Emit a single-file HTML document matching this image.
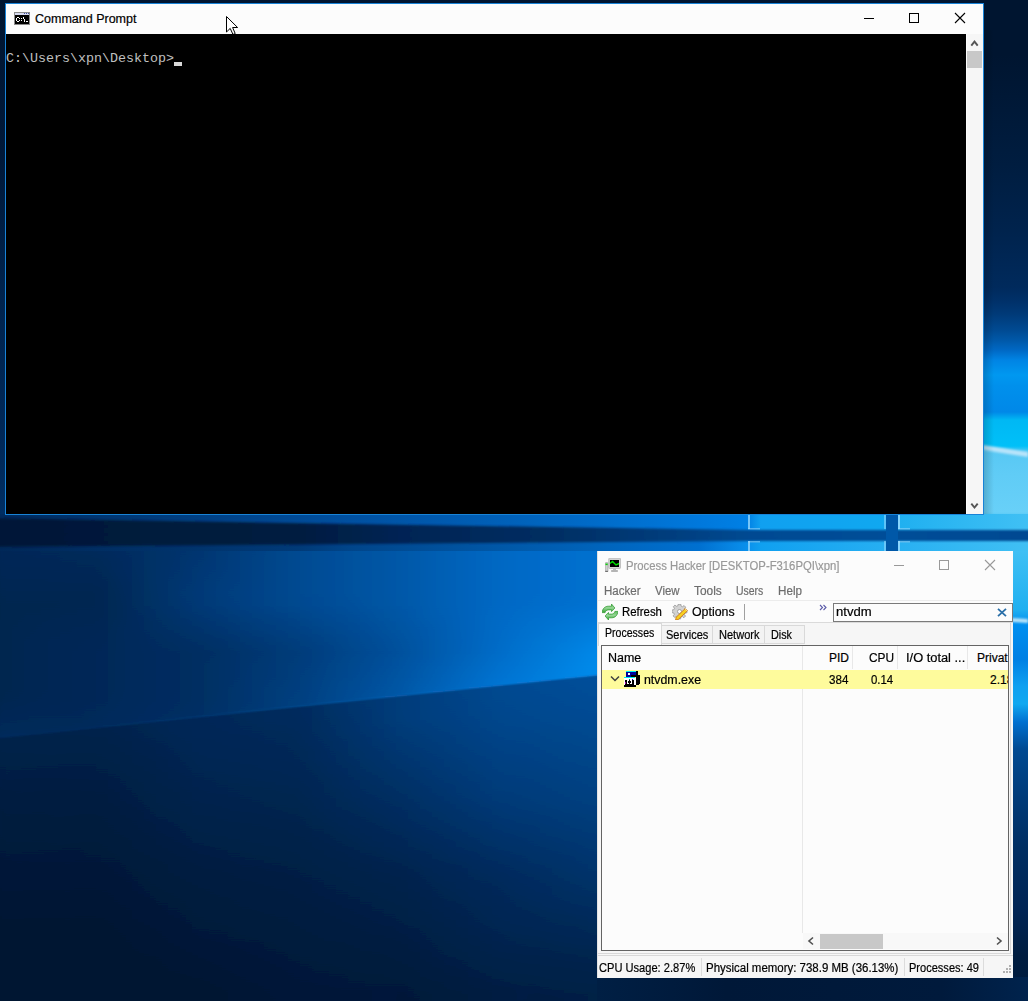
<!DOCTYPE html>
<html><head><meta charset="utf-8">
<style>
html,body{margin:0;padding:0;width:1028px;height:1001px;overflow:hidden;background:#011530;}
*{box-sizing:border-box;}
.a{position:absolute;}
.t{position:absolute;white-space:pre;font-family:"Liberation Sans",sans-serif;font-size:12px;line-height:14px;transform-origin:0 0;color:#000;-webkit-text-stroke:0.2px currentColor;}
#bg{position:absolute;left:0;top:0;width:1028px;height:1001px;}
</style></head><body>
<svg id="bg" width="1028" height="1001" viewBox="0 0 1028 1001">
  <defs>
    <filter id="b20" x="-10%" y="-10%" width="120%" height="120%"><feGaussianBlur stdDeviation="22"/></filter>
    <filter id="b4" x="-10%" y="-50%" width="120%" height="200%"><feGaussianBlur stdDeviation="3"/></filter>
    <filter id="b1" x="-10%" y="-100%" width="120%" height="300%"><feGaussianBlur stdDeviation="1"/></filter>
    <linearGradient id="rs" x1="0" y1="0" x2="0" y2="551" gradientUnits="userSpaceOnUse"><stop offset="0.0000" stop-color="#001530"/><stop offset="0.0998" stop-color="#001530"/><stop offset="0.2995" stop-color="#001d40"/><stop offset="0.4192" stop-color="#00234d"/><stop offset="0.5209" stop-color="#002a5c"/><stop offset="0.5445" stop-color="#003068"/><stop offset="0.5699" stop-color="#003a78"/><stop offset="0.5989" stop-color="#004a92"/><stop offset="0.6171" stop-color="#0058a8"/><stop offset="0.6352" stop-color="#0068c4"/><stop offset="0.6534" stop-color="#0084e4"/><stop offset="0.6806" stop-color="#0098f0"/><stop offset="0.7005" stop-color="#0090ec"/><stop offset="0.7477" stop-color="#0088e8"/><stop offset="0.7623" stop-color="#00b8f4"/><stop offset="0.8094" stop-color="#00c0f8"/><stop offset="0.8203" stop-color="#58c8f4"/><stop offset="0.8621" stop-color="#60ccf6"/><stop offset="0.9292" stop-color="#68d0f8"/><stop offset="0.9437" stop-color="#40c0f4"/><stop offset="1.0000" stop-color="#40c0f4"/></linearGradient>
    <linearGradient id="rs2" x1="0" y1="551" x2="0" y2="1001" gradientUnits="userSpaceOnUse"><stop offset="0" stop-color="#40c0f4"/><stop offset="0.13" stop-color="#20b0f0"/><stop offset="0.16" stop-color="#0090f0"/><stop offset="0.24" stop-color="#0080e4"/><stop offset="0.3" stop-color="#10a0f0"/><stop offset="0.34" stop-color="#10a8f0"/><stop offset="0.38" stop-color="#0070d0"/><stop offset="0.44" stop-color="#004a92"/><stop offset="0.55" stop-color="#003a78"/><stop offset="0.66" stop-color="#002e62"/><stop offset="0.8" stop-color="#002454"/><stop offset="0.9" stop-color="#001d40"/><stop offset="1" stop-color="#001a3c"/></linearGradient>
    <linearGradient id="bandtop" x1="0" y1="0" x2="1028" y2="0" gradientUnits="userSpaceOnUse">
      <stop offset="0" stop-color="#00336b"/>
      <stop offset="0.33" stop-color="#004080"/>
      <stop offset="0.45" stop-color="#0058a8"/>
      <stop offset="0.62" stop-color="#0070d0"/>
      <stop offset="0.72" stop-color="#0a90ec"/>
      <stop offset="0.80" stop-color="#10a0f0"/>
      <stop offset="1" stop-color="#40c0f4"/>
    </linearGradient>
    <linearGradient id="banddark" x1="0" y1="0" x2="1028" y2="0" gradientUnits="userSpaceOnUse">
      <stop offset="0" stop-color="#001838"/>
      <stop offset="0.33" stop-color="#001d40"/>
      <stop offset="0.5" stop-color="#002858"/>
      <stop offset="0.65" stop-color="#003a78"/>
      <stop offset="0.75" stop-color="#004a92"/>
      <stop offset="1" stop-color="#004a92"/>
    </linearGradient>
    <linearGradient id="bandbot" x1="0" y1="0" x2="1028" y2="0" gradientUnits="userSpaceOnUse">
      <stop offset="0" stop-color="#002e62"/>
      <stop offset="0.33" stop-color="#003a78"/>
      <stop offset="0.5" stop-color="#004a92"/>
      <stop offset="0.65" stop-color="#0070d0"/>
      <stop offset="0.75" stop-color="#10a0f0"/>
      <stop offset="1" stop-color="#40c0f4"/>
    </linearGradient>
    <linearGradient id="ray" x1="0" y1="0" x2="600" y2="0" gradientUnits="userSpaceOnUse">
      <stop offset="0" stop-color="#003a78"/>
      <stop offset="0.5" stop-color="#0058a8"/>
      <stop offset="1" stop-color="#1890f0"/>
    </linearGradient>
  </defs>
  <rect x="0" y="0" width="1028" height="1001" fill="#001530"/>
  <filter id="bh" x="-5%" y="0%" width="110%" height="100%"><feGaussianBlur stdDeviation="7 0.6"/></filter>
  <defs><linearGradient id="c0" x1="0" y1="0" x2="0" y2="1"><stop offset="0.0000" stop-color="#002858"/><stop offset="0.0263" stop-color="#002856"/><stop offset="0.0526" stop-color="#002755"/><stop offset="0.0789" stop-color="#002753"/><stop offset="0.1053" stop-color="#002651"/><stop offset="0.1316" stop-color="#002650"/><stop offset="0.1579" stop-color="#002650"/><stop offset="0.1842" stop-color="#002650"/><stop offset="0.2105" stop-color="#002650"/><stop offset="0.2368" stop-color="#002650"/><stop offset="0.2632" stop-color="#002650"/><stop offset="0.2895" stop-color="#002650"/><stop offset="0.3158" stop-color="#002650"/><stop offset="0.3421" stop-color="#002650"/><stop offset="0.3684" stop-color="#002754"/><stop offset="0.3947" stop-color="#002858"/><stop offset="0.4213" stop-color="#002a5b"/><stop offset="0.4235" stop-color="#00295b"/><stop offset="0.4264" stop-color="#00224a"/><stop offset="0.4496" stop-color="#002148"/><stop offset="0.4803" stop-color="#002046"/><stop offset="0.5110" stop-color="#001f44"/><stop offset="0.5417" stop-color="#001e41"/><stop offset="0.5724" stop-color="#001d3f"/><stop offset="0.6031" stop-color="#001c3e"/><stop offset="0.6338" stop-color="#001b3c"/><stop offset="0.6645" stop-color="#001a3b"/><stop offset="0.6952" stop-color="#001939"/><stop offset="0.7259" stop-color="#001838"/><stop offset="0.7566" stop-color="#001736"/><stop offset="0.7873" stop-color="#001735"/><stop offset="0.8180" stop-color="#001633"/><stop offset="0.8487" stop-color="#001632"/><stop offset="0.8794" stop-color="#001530"/><stop offset="0.9101" stop-color="#001530"/><stop offset="0.9408" stop-color="#001530"/><stop offset="0.9715" stop-color="#001530"/></linearGradient><linearGradient id="c1" x1="0" y1="0" x2="0" y2="1"><stop offset="0.0000" stop-color="#002858"/><stop offset="0.0263" stop-color="#002856"/><stop offset="0.0526" stop-color="#002755"/><stop offset="0.0789" stop-color="#002753"/><stop offset="0.1053" stop-color="#002651"/><stop offset="0.1316" stop-color="#002650"/><stop offset="0.1579" stop-color="#002650"/><stop offset="0.1842" stop-color="#002650"/><stop offset="0.2105" stop-color="#002650"/><stop offset="0.2368" stop-color="#002650"/><stop offset="0.2632" stop-color="#002650"/><stop offset="0.2895" stop-color="#002650"/><stop offset="0.3158" stop-color="#002650"/><stop offset="0.3421" stop-color="#002651"/><stop offset="0.3684" stop-color="#002754"/><stop offset="0.3947" stop-color="#002958"/><stop offset="0.4186" stop-color="#002a5b"/><stop offset="0.4208" stop-color="#002a5b"/><stop offset="0.4236" stop-color="#00224a"/><stop offset="0.4474" stop-color="#002148"/><stop offset="0.4781" stop-color="#002046"/><stop offset="0.5088" stop-color="#001f44"/><stop offset="0.5395" stop-color="#001e41"/><stop offset="0.5702" stop-color="#001d3f"/><stop offset="0.6009" stop-color="#001c3e"/><stop offset="0.6316" stop-color="#001b3c"/><stop offset="0.6623" stop-color="#001a3b"/><stop offset="0.6930" stop-color="#001939"/><stop offset="0.7237" stop-color="#001838"/><stop offset="0.7544" stop-color="#001737"/><stop offset="0.7851" stop-color="#001735"/><stop offset="0.8158" stop-color="#001634"/><stop offset="0.8465" stop-color="#001632"/><stop offset="0.8772" stop-color="#001531"/><stop offset="0.9079" stop-color="#001530"/><stop offset="0.9386" stop-color="#001530"/><stop offset="0.9693" stop-color="#001530"/><stop offset="1.0000" stop-color="#001530"/></linearGradient><linearGradient id="c2" x1="0" y1="0" x2="0" y2="1"><stop offset="0.0000" stop-color="#002859"/><stop offset="0.0263" stop-color="#002857"/><stop offset="0.0526" stop-color="#002755"/><stop offset="0.0789" stop-color="#002753"/><stop offset="0.1053" stop-color="#002651"/><stop offset="0.1316" stop-color="#002650"/><stop offset="0.1579" stop-color="#002650"/><stop offset="0.1842" stop-color="#002651"/><stop offset="0.2105" stop-color="#002651"/><stop offset="0.2368" stop-color="#002651"/><stop offset="0.2632" stop-color="#002651"/><stop offset="0.2895" stop-color="#002651"/><stop offset="0.3158" stop-color="#002651"/><stop offset="0.3421" stop-color="#002652"/><stop offset="0.3684" stop-color="#002855"/><stop offset="0.3947" stop-color="#002958"/><stop offset="0.4158" stop-color="#002a5b"/><stop offset="0.4180" stop-color="#002b5c"/><stop offset="0.4209" stop-color="#00224a"/><stop offset="0.4452" stop-color="#002148"/><stop offset="0.4759" stop-color="#002046"/><stop offset="0.5066" stop-color="#001f44"/><stop offset="0.5373" stop-color="#001e42"/><stop offset="0.5680" stop-color="#001d40"/><stop offset="0.5987" stop-color="#001c3e"/><stop offset="0.6294" stop-color="#001b3d"/><stop offset="0.6601" stop-color="#001a3b"/><stop offset="0.6908" stop-color="#00193a"/><stop offset="0.7215" stop-color="#001838"/><stop offset="0.7522" stop-color="#001737"/><stop offset="0.7829" stop-color="#001735"/><stop offset="0.8136" stop-color="#001634"/><stop offset="0.8443" stop-color="#001632"/><stop offset="0.8750" stop-color="#001531"/><stop offset="0.9057" stop-color="#001530"/><stop offset="0.9364" stop-color="#001530"/><stop offset="0.9671" stop-color="#001530"/><stop offset="0.9978" stop-color="#001530"/></linearGradient><linearGradient id="c3" x1="0" y1="0" x2="0" y2="1"><stop offset="0.0000" stop-color="#002959"/><stop offset="0.0263" stop-color="#002857"/><stop offset="0.0526" stop-color="#002755"/><stop offset="0.0789" stop-color="#002753"/><stop offset="0.1053" stop-color="#002651"/><stop offset="0.1316" stop-color="#002650"/><stop offset="0.1579" stop-color="#002651"/><stop offset="0.1842" stop-color="#002651"/><stop offset="0.2105" stop-color="#002652"/><stop offset="0.2368" stop-color="#002752"/><stop offset="0.2632" stop-color="#002752"/><stop offset="0.2895" stop-color="#002752"/><stop offset="0.3158" stop-color="#002752"/><stop offset="0.3421" stop-color="#002753"/><stop offset="0.3684" stop-color="#002856"/><stop offset="0.3947" stop-color="#002958"/><stop offset="0.4130" stop-color="#00295a"/><stop offset="0.4152" stop-color="#012b5d"/><stop offset="0.4181" stop-color="#00224a"/><stop offset="0.4408" stop-color="#002149"/><stop offset="0.4715" stop-color="#002046"/><stop offset="0.5022" stop-color="#001f44"/><stop offset="0.5329" stop-color="#001e42"/><stop offset="0.5636" stop-color="#001d40"/><stop offset="0.5943" stop-color="#001c3e"/><stop offset="0.6250" stop-color="#001b3d"/><stop offset="0.6557" stop-color="#001a3b"/><stop offset="0.6864" stop-color="#00193a"/><stop offset="0.7171" stop-color="#001838"/><stop offset="0.7478" stop-color="#001837"/><stop offset="0.7785" stop-color="#001735"/><stop offset="0.8092" stop-color="#001634"/><stop offset="0.8399" stop-color="#001632"/><stop offset="0.8706" stop-color="#001531"/><stop offset="0.9013" stop-color="#001530"/><stop offset="0.9320" stop-color="#001530"/><stop offset="0.9627" stop-color="#001530"/><stop offset="0.9934" stop-color="#001530"/></linearGradient><linearGradient id="c4" x1="0" y1="0" x2="0" y2="1"><stop offset="0.0000" stop-color="#00295a"/><stop offset="0.0263" stop-color="#002858"/><stop offset="0.0526" stop-color="#002855"/><stop offset="0.0789" stop-color="#002753"/><stop offset="0.1053" stop-color="#002651"/><stop offset="0.1316" stop-color="#002650"/><stop offset="0.1579" stop-color="#002651"/><stop offset="0.1842" stop-color="#002652"/><stop offset="0.2105" stop-color="#002753"/><stop offset="0.2368" stop-color="#002753"/><stop offset="0.2632" stop-color="#002753"/><stop offset="0.2895" stop-color="#002753"/><stop offset="0.3158" stop-color="#002753"/><stop offset="0.3421" stop-color="#002754"/><stop offset="0.3684" stop-color="#002856"/><stop offset="0.3947" stop-color="#002959"/><stop offset="0.4103" stop-color="#00295a"/><stop offset="0.4125" stop-color="#012c5e"/><stop offset="0.4153" stop-color="#00224b"/><stop offset="0.4386" stop-color="#002149"/><stop offset="0.4693" stop-color="#002047"/><stop offset="0.5000" stop-color="#001f44"/><stop offset="0.5307" stop-color="#001e42"/><stop offset="0.5614" stop-color="#001d40"/><stop offset="0.5921" stop-color="#001c3e"/><stop offset="0.6228" stop-color="#001b3d"/><stop offset="0.6535" stop-color="#001a3b"/><stop offset="0.6842" stop-color="#00193a"/><stop offset="0.7149" stop-color="#001838"/><stop offset="0.7456" stop-color="#001837"/><stop offset="0.7763" stop-color="#001735"/><stop offset="0.8070" stop-color="#001634"/><stop offset="0.8377" stop-color="#001632"/><stop offset="0.8684" stop-color="#001531"/><stop offset="0.8991" stop-color="#001530"/><stop offset="0.9298" stop-color="#001530"/><stop offset="0.9605" stop-color="#001530"/><stop offset="0.9912" stop-color="#001530"/></linearGradient><linearGradient id="c5" x1="0" y1="0" x2="0" y2="1"><stop offset="0.0000" stop-color="#00295a"/><stop offset="0.0263" stop-color="#002858"/><stop offset="0.0526" stop-color="#002856"/><stop offset="0.0789" stop-color="#002754"/><stop offset="0.1053" stop-color="#002651"/><stop offset="0.1316" stop-color="#002650"/><stop offset="0.1579" stop-color="#002651"/><stop offset="0.1842" stop-color="#002753"/><stop offset="0.2105" stop-color="#002754"/><stop offset="0.2368" stop-color="#002754"/><stop offset="0.2632" stop-color="#002754"/><stop offset="0.2895" stop-color="#002754"/><stop offset="0.3158" stop-color="#002754"/><stop offset="0.3421" stop-color="#002755"/><stop offset="0.3684" stop-color="#002857"/><stop offset="0.3947" stop-color="#002959"/><stop offset="0.4075" stop-color="#00295a"/><stop offset="0.4097" stop-color="#012c5f"/><stop offset="0.4126" stop-color="#00224b"/><stop offset="0.4364" stop-color="#002149"/><stop offset="0.4671" stop-color="#002047"/><stop offset="0.4978" stop-color="#001f45"/><stop offset="0.5285" stop-color="#001e42"/><stop offset="0.5592" stop-color="#001d40"/><stop offset="0.5899" stop-color="#001c3f"/><stop offset="0.6206" stop-color="#001b3d"/><stop offset="0.6513" stop-color="#001a3c"/><stop offset="0.6820" stop-color="#00193a"/><stop offset="0.7127" stop-color="#001839"/><stop offset="0.7434" stop-color="#001837"/><stop offset="0.7741" stop-color="#001736"/><stop offset="0.8048" stop-color="#001734"/><stop offset="0.8355" stop-color="#001633"/><stop offset="0.8662" stop-color="#001531"/><stop offset="0.8969" stop-color="#001530"/><stop offset="0.9276" stop-color="#001530"/><stop offset="0.9583" stop-color="#001530"/><stop offset="0.9890" stop-color="#001530"/></linearGradient><linearGradient id="c6" x1="0" y1="0" x2="0" y2="1"><stop offset="0.0000" stop-color="#00295b"/><stop offset="0.0263" stop-color="#002958"/><stop offset="0.0526" stop-color="#002856"/><stop offset="0.0789" stop-color="#002754"/><stop offset="0.1053" stop-color="#002651"/><stop offset="0.1316" stop-color="#002651"/><stop offset="0.1579" stop-color="#002652"/><stop offset="0.1842" stop-color="#002753"/><stop offset="0.2105" stop-color="#002754"/><stop offset="0.2368" stop-color="#002755"/><stop offset="0.2632" stop-color="#002755"/><stop offset="0.2895" stop-color="#002755"/><stop offset="0.3158" stop-color="#002755"/><stop offset="0.3421" stop-color="#002755"/><stop offset="0.3684" stop-color="#002857"/><stop offset="0.3947" stop-color="#002959"/><stop offset="0.4048" stop-color="#00295a"/><stop offset="0.4070" stop-color="#012d60"/><stop offset="0.4098" stop-color="#00224b"/><stop offset="0.4342" stop-color="#002149"/><stop offset="0.4649" stop-color="#002047"/><stop offset="0.4956" stop-color="#001f45"/><stop offset="0.5263" stop-color="#001e42"/><stop offset="0.5570" stop-color="#001d40"/><stop offset="0.5877" stop-color="#001c3f"/><stop offset="0.6184" stop-color="#001b3d"/><stop offset="0.6491" stop-color="#001a3c"/><stop offset="0.6798" stop-color="#00193a"/><stop offset="0.7105" stop-color="#001839"/><stop offset="0.7412" stop-color="#001837"/><stop offset="0.7719" stop-color="#001736"/><stop offset="0.8026" stop-color="#001734"/><stop offset="0.8333" stop-color="#001633"/><stop offset="0.8640" stop-color="#001531"/><stop offset="0.8947" stop-color="#001530"/><stop offset="0.9254" stop-color="#001530"/><stop offset="0.9561" stop-color="#001530"/><stop offset="0.9868" stop-color="#001530"/></linearGradient><linearGradient id="c7" x1="0" y1="0" x2="0" y2="1"><stop offset="0.0000" stop-color="#002a5b"/><stop offset="0.0263" stop-color="#002959"/><stop offset="0.0526" stop-color="#002856"/><stop offset="0.0789" stop-color="#002754"/><stop offset="0.1053" stop-color="#002651"/><stop offset="0.1316" stop-color="#002651"/><stop offset="0.1579" stop-color="#002752"/><stop offset="0.1842" stop-color="#002754"/><stop offset="0.2105" stop-color="#002755"/><stop offset="0.2368" stop-color="#002856"/><stop offset="0.2632" stop-color="#002856"/><stop offset="0.2895" stop-color="#002856"/><stop offset="0.3158" stop-color="#002856"/><stop offset="0.3421" stop-color="#002856"/><stop offset="0.3684" stop-color="#002858"/><stop offset="0.3947" stop-color="#00295a"/><stop offset="0.4020" stop-color="#00295a"/><stop offset="0.4042" stop-color="#022e61"/><stop offset="0.4070" stop-color="#00224b"/><stop offset="0.4298" stop-color="#00214a"/><stop offset="0.4605" stop-color="#002047"/><stop offset="0.4912" stop-color="#001f45"/><stop offset="0.5219" stop-color="#001e43"/><stop offset="0.5526" stop-color="#001d40"/><stop offset="0.5833" stop-color="#001c3f"/><stop offset="0.6140" stop-color="#001b3d"/><stop offset="0.6447" stop-color="#001a3c"/><stop offset="0.6754" stop-color="#00193a"/><stop offset="0.7061" stop-color="#001939"/><stop offset="0.7368" stop-color="#001837"/><stop offset="0.7675" stop-color="#001736"/><stop offset="0.7982" stop-color="#001734"/><stop offset="0.8289" stop-color="#001633"/><stop offset="0.8596" stop-color="#001631"/><stop offset="0.8904" stop-color="#001530"/><stop offset="0.9211" stop-color="#001530"/><stop offset="0.9518" stop-color="#001530"/><stop offset="0.9825" stop-color="#001530"/></linearGradient><linearGradient id="c8" x1="0" y1="0" x2="0" y2="1"><stop offset="0.0000" stop-color="#002a5c"/><stop offset="0.0263" stop-color="#002959"/><stop offset="0.0526" stop-color="#002857"/><stop offset="0.0789" stop-color="#002754"/><stop offset="0.1053" stop-color="#002651"/><stop offset="0.1316" stop-color="#002651"/><stop offset="0.1579" stop-color="#002752"/><stop offset="0.1842" stop-color="#002754"/><stop offset="0.2105" stop-color="#002756"/><stop offset="0.2368" stop-color="#002857"/><stop offset="0.2632" stop-color="#002857"/><stop offset="0.2895" stop-color="#002857"/><stop offset="0.3158" stop-color="#002857"/><stop offset="0.3421" stop-color="#002857"/><stop offset="0.3684" stop-color="#002959"/><stop offset="0.3947" stop-color="#00295a"/><stop offset="0.3992" stop-color="#00295a"/><stop offset="0.4014" stop-color="#022f63"/><stop offset="0.4043" stop-color="#00224b"/><stop offset="0.4276" stop-color="#00224a"/><stop offset="0.4583" stop-color="#002047"/><stop offset="0.4890" stop-color="#001f45"/><stop offset="0.5197" stop-color="#001e43"/><stop offset="0.5504" stop-color="#001d41"/><stop offset="0.5811" stop-color="#001c3f"/><stop offset="0.6118" stop-color="#001b3d"/><stop offset="0.6425" stop-color="#001a3c"/><stop offset="0.6732" stop-color="#001a3a"/><stop offset="0.7039" stop-color="#001939"/><stop offset="0.7346" stop-color="#001837"/><stop offset="0.7654" stop-color="#001736"/><stop offset="0.7961" stop-color="#001734"/><stop offset="0.8268" stop-color="#001633"/><stop offset="0.8575" stop-color="#001631"/><stop offset="0.8882" stop-color="#001530"/><stop offset="0.9189" stop-color="#001530"/><stop offset="0.9496" stop-color="#001530"/><stop offset="0.9803" stop-color="#001530"/></linearGradient><linearGradient id="c9" x1="0" y1="0" x2="0" y2="1"><stop offset="0.0000" stop-color="#002a5c"/><stop offset="0.0263" stop-color="#00295a"/><stop offset="0.0526" stop-color="#002957"/><stop offset="0.0789" stop-color="#002855"/><stop offset="0.1053" stop-color="#002752"/><stop offset="0.1316" stop-color="#002752"/><stop offset="0.1579" stop-color="#002753"/><stop offset="0.1842" stop-color="#002755"/><stop offset="0.2105" stop-color="#002857"/><stop offset="0.2368" stop-color="#002858"/><stop offset="0.2632" stop-color="#002858"/><stop offset="0.2895" stop-color="#002858"/><stop offset="0.3158" stop-color="#002858"/><stop offset="0.3421" stop-color="#002858"/><stop offset="0.3684" stop-color="#00295a"/><stop offset="0.3947" stop-color="#00295b"/><stop offset="0.3965" stop-color="#00295b"/><stop offset="0.3987" stop-color="#022f64"/><stop offset="0.4015" stop-color="#00224c"/><stop offset="0.4254" stop-color="#00224a"/><stop offset="0.4561" stop-color="#002148"/><stop offset="0.4868" stop-color="#002046"/><stop offset="0.5175" stop-color="#001f43"/><stop offset="0.5482" stop-color="#001d41"/><stop offset="0.5789" stop-color="#001d3f"/><stop offset="0.6096" stop-color="#001c3e"/><stop offset="0.6404" stop-color="#001b3c"/><stop offset="0.6711" stop-color="#001a3b"/><stop offset="0.7018" stop-color="#001939"/><stop offset="0.7325" stop-color="#001838"/><stop offset="0.7632" stop-color="#001736"/><stop offset="0.7939" stop-color="#001735"/><stop offset="0.8246" stop-color="#001633"/><stop offset="0.8553" stop-color="#001632"/><stop offset="0.8860" stop-color="#001530"/><stop offset="0.9167" stop-color="#001530"/><stop offset="0.9474" stop-color="#001530"/><stop offset="0.9781" stop-color="#001530"/></linearGradient><linearGradient id="c10" x1="0" y1="0" x2="0" y2="1"><stop offset="0.0000" stop-color="#002c5f"/><stop offset="0.0263" stop-color="#002b5d"/><stop offset="0.0526" stop-color="#002a5b"/><stop offset="0.0789" stop-color="#002a59"/><stop offset="0.1053" stop-color="#002957"/><stop offset="0.1316" stop-color="#002956"/><stop offset="0.1579" stop-color="#002957"/><stop offset="0.1842" stop-color="#002958"/><stop offset="0.2105" stop-color="#002959"/><stop offset="0.2368" stop-color="#002959"/><stop offset="0.2632" stop-color="#002959"/><stop offset="0.2895" stop-color="#002959"/><stop offset="0.3158" stop-color="#002959"/><stop offset="0.3421" stop-color="#00295a"/><stop offset="0.3684" stop-color="#00295b"/><stop offset="0.3937" stop-color="#002a5c"/><stop offset="0.3959" stop-color="#023166"/><stop offset="0.3987" stop-color="#00234d"/><stop offset="0.4232" stop-color="#00224c"/><stop offset="0.4539" stop-color="#002149"/><stop offset="0.4846" stop-color="#002047"/><stop offset="0.5154" stop-color="#001f45"/><stop offset="0.5461" stop-color="#001e43"/><stop offset="0.5768" stop-color="#001d41"/><stop offset="0.6075" stop-color="#001c3f"/><stop offset="0.6382" stop-color="#001b3e"/><stop offset="0.6689" stop-color="#001a3c"/><stop offset="0.6996" stop-color="#00193a"/><stop offset="0.7303" stop-color="#001939"/><stop offset="0.7610" stop-color="#001837"/><stop offset="0.7917" stop-color="#001736"/><stop offset="0.8224" stop-color="#001734"/><stop offset="0.8531" stop-color="#001633"/><stop offset="0.8838" stop-color="#001631"/><stop offset="0.9145" stop-color="#001531"/><stop offset="0.9452" stop-color="#001531"/><stop offset="0.9759" stop-color="#001530"/></linearGradient><linearGradient id="c11" x1="0" y1="0" x2="0" y2="1"><stop offset="0.0000" stop-color="#002d61"/><stop offset="0.0263" stop-color="#002c60"/><stop offset="0.0526" stop-color="#002c5e"/><stop offset="0.0789" stop-color="#002c5d"/><stop offset="0.1053" stop-color="#002b5b"/><stop offset="0.1316" stop-color="#002b5a"/><stop offset="0.1579" stop-color="#002b5a"/><stop offset="0.1842" stop-color="#002a5b"/><stop offset="0.2105" stop-color="#002a5b"/><stop offset="0.2368" stop-color="#002a5b"/><stop offset="0.2632" stop-color="#002a5b"/><stop offset="0.2895" stop-color="#002a5b"/><stop offset="0.3158" stop-color="#002a5b"/><stop offset="0.3421" stop-color="#002a5b"/><stop offset="0.3684" stop-color="#002a5c"/><stop offset="0.3909" stop-color="#002b5d"/><stop offset="0.3931" stop-color="#033268"/><stop offset="0.3960" stop-color="#00244f"/><stop offset="0.4189" stop-color="#00234d"/><stop offset="0.4496" stop-color="#00224b"/><stop offset="0.4803" stop-color="#002149"/><stop offset="0.5110" stop-color="#002047"/><stop offset="0.5417" stop-color="#001f45"/><stop offset="0.5724" stop-color="#001e43"/><stop offset="0.6031" stop-color="#001d41"/><stop offset="0.6338" stop-color="#001c3f"/><stop offset="0.6645" stop-color="#001b3d"/><stop offset="0.6952" stop-color="#001a3c"/><stop offset="0.7259" stop-color="#00193a"/><stop offset="0.7566" stop-color="#001938"/><stop offset="0.7873" stop-color="#001837"/><stop offset="0.8180" stop-color="#001735"/><stop offset="0.8487" stop-color="#001734"/><stop offset="0.8794" stop-color="#001633"/><stop offset="0.9101" stop-color="#001632"/><stop offset="0.9408" stop-color="#001531"/><stop offset="0.9715" stop-color="#001531"/></linearGradient><linearGradient id="c12" x1="0" y1="0" x2="0" y2="1"><stop offset="0.0000" stop-color="#002e64"/><stop offset="0.0263" stop-color="#002e63"/><stop offset="0.0526" stop-color="#002e62"/><stop offset="0.0789" stop-color="#002e61"/><stop offset="0.1053" stop-color="#002e60"/><stop offset="0.1316" stop-color="#002d5f"/><stop offset="0.1579" stop-color="#002c5e"/><stop offset="0.1842" stop-color="#002c5d"/><stop offset="0.2105" stop-color="#002b5c"/><stop offset="0.2368" stop-color="#002a5c"/><stop offset="0.2632" stop-color="#002a5c"/><stop offset="0.2895" stop-color="#002a5c"/><stop offset="0.3158" stop-color="#002a5c"/><stop offset="0.3421" stop-color="#002a5c"/><stop offset="0.3684" stop-color="#002b5d"/><stop offset="0.3882" stop-color="#002b5e"/><stop offset="0.3904" stop-color="#03336a"/><stop offset="0.3932" stop-color="#002550"/><stop offset="0.4167" stop-color="#00244f"/><stop offset="0.4474" stop-color="#00234d"/><stop offset="0.4781" stop-color="#00224b"/><stop offset="0.5088" stop-color="#002148"/><stop offset="0.5395" stop-color="#002046"/><stop offset="0.5702" stop-color="#001f44"/><stop offset="0.6009" stop-color="#001e42"/><stop offset="0.6316" stop-color="#001d41"/><stop offset="0.6623" stop-color="#001c3f"/><stop offset="0.6930" stop-color="#001b3d"/><stop offset="0.7237" stop-color="#001a3b"/><stop offset="0.7544" stop-color="#00193a"/><stop offset="0.7851" stop-color="#001838"/><stop offset="0.8158" stop-color="#001837"/><stop offset="0.8465" stop-color="#001735"/><stop offset="0.8772" stop-color="#001634"/><stop offset="0.9079" stop-color="#001633"/><stop offset="0.9386" stop-color="#001632"/><stop offset="0.9693" stop-color="#001531"/><stop offset="1.0000" stop-color="#001530"/></linearGradient><linearGradient id="c13" x1="0" y1="0" x2="0" y2="1"><stop offset="0.0000" stop-color="#003066"/><stop offset="0.0263" stop-color="#003066"/><stop offset="0.0526" stop-color="#003065"/><stop offset="0.0789" stop-color="#003065"/><stop offset="0.1053" stop-color="#003064"/><stop offset="0.1316" stop-color="#003063"/><stop offset="0.1579" stop-color="#002e62"/><stop offset="0.1842" stop-color="#002d60"/><stop offset="0.2105" stop-color="#002c5e"/><stop offset="0.2368" stop-color="#002b5d"/><stop offset="0.2632" stop-color="#002b5d"/><stop offset="0.2895" stop-color="#002b5d"/><stop offset="0.3158" stop-color="#002b5d"/><stop offset="0.3421" stop-color="#002b5d"/><stop offset="0.3684" stop-color="#002c5f"/><stop offset="0.3854" stop-color="#002c60"/><stop offset="0.3876" stop-color="#03346c"/><stop offset="0.3905" stop-color="#002552"/><stop offset="0.4145" stop-color="#002550"/><stop offset="0.4452" stop-color="#00244e"/><stop offset="0.4759" stop-color="#00234c"/><stop offset="0.5066" stop-color="#00224a"/><stop offset="0.5373" stop-color="#002148"/><stop offset="0.5680" stop-color="#002046"/><stop offset="0.5987" stop-color="#001f44"/><stop offset="0.6294" stop-color="#001e42"/><stop offset="0.6601" stop-color="#001d40"/><stop offset="0.6908" stop-color="#001c3e"/><stop offset="0.7215" stop-color="#001b3c"/><stop offset="0.7522" stop-color="#001a3b"/><stop offset="0.7829" stop-color="#001939"/><stop offset="0.8136" stop-color="#001838"/><stop offset="0.8443" stop-color="#001836"/><stop offset="0.8750" stop-color="#001735"/><stop offset="0.9057" stop-color="#001633"/><stop offset="0.9364" stop-color="#001632"/><stop offset="0.9671" stop-color="#001531"/><stop offset="0.9978" stop-color="#001530"/></linearGradient><linearGradient id="c14" x1="0" y1="0" x2="0" y2="1"><stop offset="0.0000" stop-color="#003168"/><stop offset="0.0263" stop-color="#003168"/><stop offset="0.0526" stop-color="#003269"/><stop offset="0.0789" stop-color="#003269"/><stop offset="0.1053" stop-color="#003269"/><stop offset="0.1316" stop-color="#003268"/><stop offset="0.1579" stop-color="#003065"/><stop offset="0.1842" stop-color="#002f63"/><stop offset="0.2105" stop-color="#002d60"/><stop offset="0.2368" stop-color="#002c5e"/><stop offset="0.2632" stop-color="#002c5e"/><stop offset="0.2895" stop-color="#002c5e"/><stop offset="0.3158" stop-color="#002c5e"/><stop offset="0.3421" stop-color="#002c5e"/><stop offset="0.3684" stop-color="#002c60"/><stop offset="0.3827" stop-color="#002d61"/><stop offset="0.3848" stop-color="#03366f"/><stop offset="0.3877" stop-color="#002654"/><stop offset="0.4101" stop-color="#002552"/><stop offset="0.4408" stop-color="#002450"/><stop offset="0.4715" stop-color="#00234e"/><stop offset="0.5022" stop-color="#00224c"/><stop offset="0.5329" stop-color="#00224a"/><stop offset="0.5636" stop-color="#002148"/><stop offset="0.5943" stop-color="#002046"/><stop offset="0.6250" stop-color="#001e44"/><stop offset="0.6557" stop-color="#001d42"/><stop offset="0.6864" stop-color="#001c3f"/><stop offset="0.7171" stop-color="#001b3d"/><stop offset="0.7478" stop-color="#001a3c"/><stop offset="0.7785" stop-color="#001a3a"/><stop offset="0.8092" stop-color="#001939"/><stop offset="0.8399" stop-color="#001837"/><stop offset="0.8706" stop-color="#001736"/><stop offset="0.9013" stop-color="#001734"/><stop offset="0.9320" stop-color="#001633"/><stop offset="0.9627" stop-color="#001632"/><stop offset="0.9934" stop-color="#001530"/></linearGradient><linearGradient id="c15" x1="0" y1="0" x2="0" y2="1"><stop offset="0.0000" stop-color="#00326b"/><stop offset="0.0263" stop-color="#00336b"/><stop offset="0.0526" stop-color="#00336c"/><stop offset="0.0789" stop-color="#00346d"/><stop offset="0.1053" stop-color="#00346d"/><stop offset="0.1316" stop-color="#00346c"/><stop offset="0.1579" stop-color="#003269"/><stop offset="0.1842" stop-color="#003065"/><stop offset="0.2105" stop-color="#002e62"/><stop offset="0.2368" stop-color="#002c5f"/><stop offset="0.2632" stop-color="#002c5f"/><stop offset="0.2895" stop-color="#002c5f"/><stop offset="0.3158" stop-color="#002c5f"/><stop offset="0.3421" stop-color="#002c60"/><stop offset="0.3684" stop-color="#002d61"/><stop offset="0.3799" stop-color="#002d62"/><stop offset="0.3821" stop-color="#043771"/><stop offset="0.3849" stop-color="#002755"/><stop offset="0.4079" stop-color="#002654"/><stop offset="0.4386" stop-color="#002552"/><stop offset="0.4693" stop-color="#002450"/><stop offset="0.5000" stop-color="#00234e"/><stop offset="0.5307" stop-color="#00224b"/><stop offset="0.5614" stop-color="#002149"/><stop offset="0.5921" stop-color="#002047"/><stop offset="0.6228" stop-color="#001f45"/><stop offset="0.6535" stop-color="#001e43"/><stop offset="0.6842" stop-color="#001d41"/><stop offset="0.7149" stop-color="#001c3f"/><stop offset="0.7456" stop-color="#001b3d"/><stop offset="0.7763" stop-color="#001a3b"/><stop offset="0.8070" stop-color="#00193a"/><stop offset="0.8377" stop-color="#001938"/><stop offset="0.8684" stop-color="#001837"/><stop offset="0.8991" stop-color="#001735"/><stop offset="0.9298" stop-color="#001634"/><stop offset="0.9605" stop-color="#001632"/><stop offset="0.9912" stop-color="#001530"/></linearGradient><linearGradient id="c16" x1="0" y1="0" x2="0" y2="1"><stop offset="0.0000" stop-color="#00336d"/><stop offset="0.0263" stop-color="#00346e"/><stop offset="0.0526" stop-color="#00356f"/><stop offset="0.0789" stop-color="#003671"/><stop offset="0.1053" stop-color="#003772"/><stop offset="0.1316" stop-color="#003671"/><stop offset="0.1579" stop-color="#00346c"/><stop offset="0.1842" stop-color="#003168"/><stop offset="0.2105" stop-color="#002f64"/><stop offset="0.2368" stop-color="#002d61"/><stop offset="0.2632" stop-color="#002d61"/><stop offset="0.2895" stop-color="#002d61"/><stop offset="0.3158" stop-color="#002d61"/><stop offset="0.3421" stop-color="#002d61"/><stop offset="0.3684" stop-color="#002e62"/><stop offset="0.3771" stop-color="#002e63"/><stop offset="0.3793" stop-color="#043873"/><stop offset="0.3822" stop-color="#002756"/><stop offset="0.4057" stop-color="#002755"/><stop offset="0.4364" stop-color="#002653"/><stop offset="0.4671" stop-color="#002551"/><stop offset="0.4978" stop-color="#00244f"/><stop offset="0.5285" stop-color="#00234d"/><stop offset="0.5592" stop-color="#00224b"/><stop offset="0.5899" stop-color="#002149"/><stop offset="0.6206" stop-color="#002047"/><stop offset="0.6513" stop-color="#001f44"/><stop offset="0.6820" stop-color="#001e42"/><stop offset="0.7127" stop-color="#001d40"/><stop offset="0.7434" stop-color="#001c3e"/><stop offset="0.7741" stop-color="#001b3c"/><stop offset="0.8048" stop-color="#001a3b"/><stop offset="0.8355" stop-color="#001939"/><stop offset="0.8662" stop-color="#001838"/><stop offset="0.8969" stop-color="#001736"/><stop offset="0.9276" stop-color="#001734"/><stop offset="0.9583" stop-color="#001633"/><stop offset="0.9890" stop-color="#001531"/></linearGradient><linearGradient id="c17" x1="0" y1="0" x2="0" y2="1"><stop offset="0.0000" stop-color="#003570"/><stop offset="0.0263" stop-color="#003671"/><stop offset="0.0526" stop-color="#003773"/><stop offset="0.0789" stop-color="#003875"/><stop offset="0.1053" stop-color="#003976"/><stop offset="0.1316" stop-color="#003875"/><stop offset="0.1579" stop-color="#003670"/><stop offset="0.1842" stop-color="#00336b"/><stop offset="0.2105" stop-color="#003066"/><stop offset="0.2368" stop-color="#002e62"/><stop offset="0.2632" stop-color="#002e62"/><stop offset="0.2895" stop-color="#002e62"/><stop offset="0.3158" stop-color="#002e62"/><stop offset="0.3421" stop-color="#002e62"/><stop offset="0.3684" stop-color="#002f64"/><stop offset="0.3744" stop-color="#002f64"/><stop offset="0.3766" stop-color="#043975"/><stop offset="0.3794" stop-color="#002857"/><stop offset="0.4035" stop-color="#002757"/><stop offset="0.4342" stop-color="#002655"/><stop offset="0.4649" stop-color="#002653"/><stop offset="0.4956" stop-color="#002551"/><stop offset="0.5263" stop-color="#00244f"/><stop offset="0.5570" stop-color="#00234d"/><stop offset="0.5877" stop-color="#00224b"/><stop offset="0.6184" stop-color="#002148"/><stop offset="0.6491" stop-color="#002046"/><stop offset="0.6798" stop-color="#001e43"/><stop offset="0.7105" stop-color="#001d41"/><stop offset="0.7412" stop-color="#001c3f"/><stop offset="0.7719" stop-color="#001b3d"/><stop offset="0.8026" stop-color="#001b3c"/><stop offset="0.8333" stop-color="#001a3b"/><stop offset="0.8640" stop-color="#001939"/><stop offset="0.8947" stop-color="#001837"/><stop offset="0.9254" stop-color="#001735"/><stop offset="0.9561" stop-color="#001633"/><stop offset="0.9868" stop-color="#001531"/></linearGradient><linearGradient id="c18" x1="0" y1="0" x2="0" y2="1"><stop offset="0.0000" stop-color="#003773"/><stop offset="0.0263" stop-color="#003875"/><stop offset="0.0526" stop-color="#003977"/><stop offset="0.0789" stop-color="#003a78"/><stop offset="0.1053" stop-color="#003b7a"/><stop offset="0.1316" stop-color="#003a78"/><stop offset="0.1579" stop-color="#003773"/><stop offset="0.1842" stop-color="#00356e"/><stop offset="0.2105" stop-color="#003268"/><stop offset="0.2368" stop-color="#002f64"/><stop offset="0.2632" stop-color="#003065"/><stop offset="0.2895" stop-color="#003065"/><stop offset="0.3158" stop-color="#003065"/><stop offset="0.3421" stop-color="#003065"/><stop offset="0.3684" stop-color="#003067"/><stop offset="0.3716" stop-color="#003067"/><stop offset="0.3738" stop-color="#043c78"/><stop offset="0.3766" stop-color="#002858"/><stop offset="0.3991" stop-color="#002857"/><stop offset="0.4298" stop-color="#002755"/><stop offset="0.4605" stop-color="#002654"/><stop offset="0.4912" stop-color="#002552"/><stop offset="0.5219" stop-color="#002450"/><stop offset="0.5526" stop-color="#00234e"/><stop offset="0.5833" stop-color="#00224b"/><stop offset="0.6140" stop-color="#002149"/><stop offset="0.6447" stop-color="#002047"/><stop offset="0.6754" stop-color="#001f44"/><stop offset="0.7061" stop-color="#001e42"/><stop offset="0.7368" stop-color="#001d40"/><stop offset="0.7675" stop-color="#001c3e"/><stop offset="0.7982" stop-color="#001b3d"/><stop offset="0.8289" stop-color="#001a3b"/><stop offset="0.8596" stop-color="#00193a"/><stop offset="0.8904" stop-color="#001838"/><stop offset="0.9211" stop-color="#001736"/><stop offset="0.9518" stop-color="#001734"/><stop offset="0.9825" stop-color="#001632"/></linearGradient><linearGradient id="c19" x1="0" y1="0" x2="0" y2="1"><stop offset="0.0000" stop-color="#003a77"/><stop offset="0.0263" stop-color="#003a79"/><stop offset="0.0526" stop-color="#003b7a"/><stop offset="0.0789" stop-color="#003c7c"/><stop offset="0.1053" stop-color="#003d7d"/><stop offset="0.1316" stop-color="#003c7b"/><stop offset="0.1579" stop-color="#003976"/><stop offset="0.1842" stop-color="#003671"/><stop offset="0.2105" stop-color="#00336b"/><stop offset="0.2368" stop-color="#003167"/><stop offset="0.2632" stop-color="#003168"/><stop offset="0.2895" stop-color="#003268"/><stop offset="0.3158" stop-color="#003268"/><stop offset="0.3421" stop-color="#003269"/><stop offset="0.3688" stop-color="#00326a"/><stop offset="0.3710" stop-color="#053e7c"/><stop offset="0.3739" stop-color="#002858"/><stop offset="0.3969" stop-color="#002858"/><stop offset="0.4276" stop-color="#002756"/><stop offset="0.4583" stop-color="#002654"/><stop offset="0.4890" stop-color="#002652"/><stop offset="0.5197" stop-color="#002550"/><stop offset="0.5504" stop-color="#00244e"/><stop offset="0.5811" stop-color="#00234c"/><stop offset="0.6118" stop-color="#00224a"/><stop offset="0.6425" stop-color="#002147"/><stop offset="0.6732" stop-color="#001f45"/><stop offset="0.7039" stop-color="#001e42"/><stop offset="0.7346" stop-color="#001d40"/><stop offset="0.7654" stop-color="#001c3f"/><stop offset="0.7961" stop-color="#001b3d"/><stop offset="0.8268" stop-color="#001a3c"/><stop offset="0.8575" stop-color="#00193a"/><stop offset="0.8882" stop-color="#001839"/><stop offset="0.9189" stop-color="#001837"/><stop offset="0.9496" stop-color="#001735"/><stop offset="0.9803" stop-color="#001633"/></linearGradient><linearGradient id="c20" x1="0" y1="0" x2="0" y2="1"><stop offset="0.0000" stop-color="#003c7c"/><stop offset="0.0263" stop-color="#003d7d"/><stop offset="0.0526" stop-color="#003e7e"/><stop offset="0.0789" stop-color="#003e7f"/><stop offset="0.1053" stop-color="#003f80"/><stop offset="0.1316" stop-color="#003e7f"/><stop offset="0.1579" stop-color="#003b79"/><stop offset="0.1842" stop-color="#003874"/><stop offset="0.2105" stop-color="#00356e"/><stop offset="0.2368" stop-color="#00336a"/><stop offset="0.2632" stop-color="#00336b"/><stop offset="0.2895" stop-color="#00336b"/><stop offset="0.3158" stop-color="#00346c"/><stop offset="0.3421" stop-color="#00346c"/><stop offset="0.3661" stop-color="#00356d"/><stop offset="0.3683" stop-color="#05407f"/><stop offset="0.3711" stop-color="#002959"/><stop offset="0.3947" stop-color="#002859"/><stop offset="0.4254" stop-color="#002857"/><stop offset="0.4561" stop-color="#002755"/><stop offset="0.4868" stop-color="#002653"/><stop offset="0.5175" stop-color="#002551"/><stop offset="0.5482" stop-color="#00244f"/><stop offset="0.5789" stop-color="#00234d"/><stop offset="0.6096" stop-color="#00224a"/><stop offset="0.6404" stop-color="#002148"/><stop offset="0.6711" stop-color="#002045"/><stop offset="0.7018" stop-color="#001f43"/><stop offset="0.7325" stop-color="#001d41"/><stop offset="0.7632" stop-color="#001c3f"/><stop offset="0.7939" stop-color="#001c3e"/><stop offset="0.8246" stop-color="#001b3c"/><stop offset="0.8553" stop-color="#001a3b"/><stop offset="0.8860" stop-color="#001939"/><stop offset="0.9167" stop-color="#001838"/><stop offset="0.9474" stop-color="#001736"/><stop offset="0.9781" stop-color="#001734"/></linearGradient><linearGradient id="c21" x1="0" y1="0" x2="0" y2="1"><stop offset="0.0000" stop-color="#003f80"/><stop offset="0.0263" stop-color="#003f81"/><stop offset="0.0526" stop-color="#004082"/><stop offset="0.0789" stop-color="#004082"/><stop offset="0.1053" stop-color="#004183"/><stop offset="0.1316" stop-color="#004082"/><stop offset="0.1579" stop-color="#003d7c"/><stop offset="0.1842" stop-color="#003a77"/><stop offset="0.2105" stop-color="#003771"/><stop offset="0.2368" stop-color="#00356d"/><stop offset="0.2632" stop-color="#00356e"/><stop offset="0.2895" stop-color="#00356f"/><stop offset="0.3158" stop-color="#00366f"/><stop offset="0.3421" stop-color="#003670"/><stop offset="0.3633" stop-color="#003771"/><stop offset="0.3655" stop-color="#054383"/><stop offset="0.3684" stop-color="#00295a"/><stop offset="0.3925" stop-color="#002959"/><stop offset="0.4232" stop-color="#002857"/><stop offset="0.4539" stop-color="#002755"/><stop offset="0.4846" stop-color="#002653"/><stop offset="0.5154" stop-color="#002651"/><stop offset="0.5461" stop-color="#00254f"/><stop offset="0.5768" stop-color="#00244d"/><stop offset="0.6075" stop-color="#00224b"/><stop offset="0.6382" stop-color="#002148"/><stop offset="0.6689" stop-color="#002046"/><stop offset="0.6996" stop-color="#001f44"/><stop offset="0.7303" stop-color="#001e42"/><stop offset="0.7610" stop-color="#001d40"/><stop offset="0.7917" stop-color="#001c3f"/><stop offset="0.8224" stop-color="#001b3d"/><stop offset="0.8531" stop-color="#001a3c"/><stop offset="0.8838" stop-color="#00193a"/><stop offset="0.9145" stop-color="#001838"/><stop offset="0.9452" stop-color="#001837"/><stop offset="0.9759" stop-color="#001735"/></linearGradient><linearGradient id="c22" x1="0" y1="0" x2="0" y2="1"><stop offset="0.0000" stop-color="#004184"/><stop offset="0.0263" stop-color="#004284"/><stop offset="0.0526" stop-color="#004285"/><stop offset="0.0789" stop-color="#004386"/><stop offset="0.1053" stop-color="#004387"/><stop offset="0.1316" stop-color="#004285"/><stop offset="0.1579" stop-color="#003f7f"/><stop offset="0.1842" stop-color="#003c7a"/><stop offset="0.2105" stop-color="#003874"/><stop offset="0.2368" stop-color="#003670"/><stop offset="0.2632" stop-color="#003771"/><stop offset="0.2895" stop-color="#003772"/><stop offset="0.3158" stop-color="#003873"/><stop offset="0.3421" stop-color="#003873"/><stop offset="0.3605" stop-color="#003974"/><stop offset="0.3627" stop-color="#064587"/><stop offset="0.3656" stop-color="#00295a"/><stop offset="0.3882" stop-color="#00295a"/><stop offset="0.4189" stop-color="#002858"/><stop offset="0.4496" stop-color="#002856"/><stop offset="0.4803" stop-color="#002754"/><stop offset="0.5110" stop-color="#002652"/><stop offset="0.5417" stop-color="#002550"/><stop offset="0.5724" stop-color="#00244e"/><stop offset="0.6031" stop-color="#00234b"/><stop offset="0.6338" stop-color="#002249"/><stop offset="0.6645" stop-color="#002147"/><stop offset="0.6952" stop-color="#001f44"/><stop offset="0.7259" stop-color="#001e42"/><stop offset="0.7566" stop-color="#001d41"/><stop offset="0.7873" stop-color="#001c3f"/><stop offset="0.8180" stop-color="#001b3e"/><stop offset="0.8487" stop-color="#001a3c"/><stop offset="0.8794" stop-color="#00193b"/><stop offset="0.9101" stop-color="#001939"/><stop offset="0.9408" stop-color="#001838"/><stop offset="0.9715" stop-color="#001736"/></linearGradient><linearGradient id="c23" x1="0" y1="0" x2="0" y2="1"><stop offset="0.0000" stop-color="#004488"/><stop offset="0.0263" stop-color="#004488"/><stop offset="0.0526" stop-color="#004489"/><stop offset="0.0789" stop-color="#004589"/><stop offset="0.1053" stop-color="#00458a"/><stop offset="0.1316" stop-color="#004488"/><stop offset="0.1579" stop-color="#004182"/><stop offset="0.1842" stop-color="#003d7d"/><stop offset="0.2105" stop-color="#003a77"/><stop offset="0.2368" stop-color="#003873"/><stop offset="0.2632" stop-color="#003974"/><stop offset="0.2895" stop-color="#003975"/><stop offset="0.3158" stop-color="#003a76"/><stop offset="0.3421" stop-color="#003b77"/><stop offset="0.3578" stop-color="#003b77"/><stop offset="0.3600" stop-color="#06478a"/><stop offset="0.3628" stop-color="#002a5b"/><stop offset="0.3860" stop-color="#00295b"/><stop offset="0.4167" stop-color="#002959"/><stop offset="0.4474" stop-color="#002857"/><stop offset="0.4781" stop-color="#002755"/><stop offset="0.5088" stop-color="#002652"/><stop offset="0.5395" stop-color="#002650"/><stop offset="0.5702" stop-color="#00254e"/><stop offset="0.6009" stop-color="#00234c"/><stop offset="0.6316" stop-color="#00224a"/><stop offset="0.6623" stop-color="#002147"/><stop offset="0.6930" stop-color="#002045"/><stop offset="0.7237" stop-color="#001e43"/><stop offset="0.7544" stop-color="#001d41"/><stop offset="0.7851" stop-color="#001d40"/><stop offset="0.8158" stop-color="#001c3e"/><stop offset="0.8465" stop-color="#001b3d"/><stop offset="0.8772" stop-color="#001a3b"/><stop offset="0.9079" stop-color="#00193a"/><stop offset="0.9386" stop-color="#001838"/><stop offset="0.9693" stop-color="#001837"/><stop offset="1.0000" stop-color="#001736"/></linearGradient><linearGradient id="c24" x1="0" y1="0" x2="0" y2="1"><stop offset="0.0000" stop-color="#00468c"/><stop offset="0.0263" stop-color="#00468c"/><stop offset="0.0526" stop-color="#00478d"/><stop offset="0.0789" stop-color="#00478d"/><stop offset="0.1053" stop-color="#00478d"/><stop offset="0.1316" stop-color="#00468b"/><stop offset="0.1579" stop-color="#004285"/><stop offset="0.1842" stop-color="#003f80"/><stop offset="0.2105" stop-color="#003c7a"/><stop offset="0.2368" stop-color="#003a76"/><stop offset="0.2632" stop-color="#003a77"/><stop offset="0.2895" stop-color="#003b78"/><stop offset="0.3158" stop-color="#003c7a"/><stop offset="0.3421" stop-color="#003d7b"/><stop offset="0.3550" stop-color="#003d7b"/><stop offset="0.3572" stop-color="#06498e"/><stop offset="0.3601" stop-color="#002a5c"/><stop offset="0.3838" stop-color="#002a5b"/><stop offset="0.4145" stop-color="#002959"/><stop offset="0.4452" stop-color="#002857"/><stop offset="0.4759" stop-color="#002755"/><stop offset="0.5066" stop-color="#002753"/><stop offset="0.5373" stop-color="#002651"/><stop offset="0.5680" stop-color="#00254f"/><stop offset="0.5987" stop-color="#00244d"/><stop offset="0.6294" stop-color="#00234a"/><stop offset="0.6601" stop-color="#002148"/><stop offset="0.6908" stop-color="#002046"/><stop offset="0.7215" stop-color="#001f43"/><stop offset="0.7522" stop-color="#001e42"/><stop offset="0.7829" stop-color="#001d40"/><stop offset="0.8136" stop-color="#001c3f"/><stop offset="0.8443" stop-color="#001b3d"/><stop offset="0.8750" stop-color="#001a3c"/><stop offset="0.9057" stop-color="#00193b"/><stop offset="0.9364" stop-color="#001939"/><stop offset="0.9671" stop-color="#001838"/><stop offset="0.9978" stop-color="#001837"/></linearGradient><linearGradient id="c25" x1="0" y1="0" x2="0" y2="1"><stop offset="0.0000" stop-color="#004990"/><stop offset="0.0263" stop-color="#004990"/><stop offset="0.0526" stop-color="#004990"/><stop offset="0.0789" stop-color="#004990"/><stop offset="0.1053" stop-color="#004990"/><stop offset="0.1316" stop-color="#00488e"/><stop offset="0.1579" stop-color="#004488"/><stop offset="0.1842" stop-color="#004183"/><stop offset="0.2105" stop-color="#003e7d"/><stop offset="0.2368" stop-color="#003b79"/><stop offset="0.2632" stop-color="#003c7a"/><stop offset="0.2895" stop-color="#003d7c"/><stop offset="0.3158" stop-color="#003e7d"/><stop offset="0.3421" stop-color="#003f7e"/><stop offset="0.3523" stop-color="#003f7e"/><stop offset="0.3545" stop-color="#064c91"/><stop offset="0.3573" stop-color="#002b5d"/><stop offset="0.3816" stop-color="#002a5c"/><stop offset="0.4123" stop-color="#00295a"/><stop offset="0.4430" stop-color="#002958"/><stop offset="0.4737" stop-color="#002856"/><stop offset="0.5044" stop-color="#002754"/><stop offset="0.5351" stop-color="#002651"/><stop offset="0.5658" stop-color="#00264f"/><stop offset="0.5965" stop-color="#00244d"/><stop offset="0.6272" stop-color="#00234b"/><stop offset="0.6579" stop-color="#002249"/><stop offset="0.6886" stop-color="#002046"/><stop offset="0.7193" stop-color="#001f44"/><stop offset="0.7500" stop-color="#001e42"/><stop offset="0.7807" stop-color="#001d41"/><stop offset="0.8114" stop-color="#001c3f"/><stop offset="0.8421" stop-color="#001b3e"/><stop offset="0.8728" stop-color="#001a3d"/><stop offset="0.9035" stop-color="#001a3b"/><stop offset="0.9342" stop-color="#00193a"/><stop offset="0.9649" stop-color="#001839"/><stop offset="0.9956" stop-color="#001838"/></linearGradient><linearGradient id="c26" x1="0" y1="0" x2="0" y2="1"><stop offset="0.0000" stop-color="#004b93"/><stop offset="0.0263" stop-color="#004b93"/><stop offset="0.0526" stop-color="#004b93"/><stop offset="0.0789" stop-color="#004b93"/><stop offset="0.1053" stop-color="#004b93"/><stop offset="0.1316" stop-color="#004991"/><stop offset="0.1579" stop-color="#00468b"/><stop offset="0.1842" stop-color="#004386"/><stop offset="0.2105" stop-color="#004080"/><stop offset="0.2368" stop-color="#003d7c"/><stop offset="0.2632" stop-color="#003e7e"/><stop offset="0.2895" stop-color="#003f7f"/><stop offset="0.3158" stop-color="#004181"/><stop offset="0.3421" stop-color="#004182"/><stop offset="0.3495" stop-color="#004182"/><stop offset="0.3517" stop-color="#074e95"/><stop offset="0.3545" stop-color="#002c5f"/><stop offset="0.3772" stop-color="#002b5e"/><stop offset="0.4079" stop-color="#002a5c"/><stop offset="0.4386" stop-color="#002a5a"/><stop offset="0.4693" stop-color="#002958"/><stop offset="0.5000" stop-color="#002855"/><stop offset="0.5307" stop-color="#002753"/><stop offset="0.5614" stop-color="#002651"/><stop offset="0.5921" stop-color="#00254f"/><stop offset="0.6228" stop-color="#00244c"/><stop offset="0.6535" stop-color="#00224a"/><stop offset="0.6842" stop-color="#002148"/><stop offset="0.7149" stop-color="#002045"/><stop offset="0.7456" stop-color="#001f43"/><stop offset="0.7763" stop-color="#001e42"/><stop offset="0.8070" stop-color="#001d40"/><stop offset="0.8377" stop-color="#001c3f"/><stop offset="0.8684" stop-color="#001b3d"/><stop offset="0.8991" stop-color="#001a3c"/><stop offset="0.9298" stop-color="#00193b"/><stop offset="0.9605" stop-color="#001939"/><stop offset="0.9912" stop-color="#001838"/></linearGradient><linearGradient id="c27" x1="0" y1="0" x2="0" y2="1"><stop offset="0.0000" stop-color="#004d96"/><stop offset="0.0263" stop-color="#004d96"/><stop offset="0.0526" stop-color="#004d96"/><stop offset="0.0789" stop-color="#004d96"/><stop offset="0.1053" stop-color="#004d96"/><stop offset="0.1316" stop-color="#004b94"/><stop offset="0.1579" stop-color="#00488f"/><stop offset="0.1842" stop-color="#004589"/><stop offset="0.2105" stop-color="#004284"/><stop offset="0.2368" stop-color="#004081"/><stop offset="0.2632" stop-color="#004182"/><stop offset="0.2895" stop-color="#004284"/><stop offset="0.3158" stop-color="#004386"/><stop offset="0.3421" stop-color="#004487"/><stop offset="0.3467" stop-color="#004487"/><stop offset="0.3489" stop-color="#07519a"/><stop offset="0.3518" stop-color="#002e63"/><stop offset="0.3750" stop-color="#002e62"/><stop offset="0.4057" stop-color="#002d60"/><stop offset="0.4364" stop-color="#002c5d"/><stop offset="0.4671" stop-color="#002a5b"/><stop offset="0.4978" stop-color="#002958"/><stop offset="0.5285" stop-color="#002856"/><stop offset="0.5592" stop-color="#002753"/><stop offset="0.5899" stop-color="#002651"/><stop offset="0.6206" stop-color="#00254e"/><stop offset="0.6513" stop-color="#00234c"/><stop offset="0.6820" stop-color="#002249"/><stop offset="0.7127" stop-color="#002047"/><stop offset="0.7434" stop-color="#001f45"/><stop offset="0.7741" stop-color="#001e43"/><stop offset="0.8048" stop-color="#001d41"/><stop offset="0.8355" stop-color="#001c40"/><stop offset="0.8662" stop-color="#001b3e"/><stop offset="0.8969" stop-color="#001a3c"/><stop offset="0.9276" stop-color="#001a3b"/><stop offset="0.9583" stop-color="#00193a"/><stop offset="0.9890" stop-color="#001838"/></linearGradient><linearGradient id="c28" x1="0" y1="0" x2="0" y2="1"><stop offset="0.0000" stop-color="#004e99"/><stop offset="0.0263" stop-color="#004e99"/><stop offset="0.0526" stop-color="#004e99"/><stop offset="0.0789" stop-color="#004e99"/><stop offset="0.1053" stop-color="#004e99"/><stop offset="0.1316" stop-color="#004d97"/><stop offset="0.1579" stop-color="#004a92"/><stop offset="0.1842" stop-color="#00478d"/><stop offset="0.2105" stop-color="#004488"/><stop offset="0.2368" stop-color="#004285"/><stop offset="0.2632" stop-color="#004487"/><stop offset="0.2895" stop-color="#004588"/><stop offset="0.3158" stop-color="#00468a"/><stop offset="0.3421" stop-color="#00478c"/><stop offset="0.3440" stop-color="#00478c"/><stop offset="0.3462" stop-color="#07549e"/><stop offset="0.3490" stop-color="#003067"/><stop offset="0.3728" stop-color="#003065"/><stop offset="0.4035" stop-color="#002f63"/><stop offset="0.4342" stop-color="#002d61"/><stop offset="0.4649" stop-color="#002c5e"/><stop offset="0.4956" stop-color="#002b5b"/><stop offset="0.5263" stop-color="#002a58"/><stop offset="0.5570" stop-color="#002856"/><stop offset="0.5877" stop-color="#002753"/><stop offset="0.6184" stop-color="#002550"/><stop offset="0.6491" stop-color="#00244d"/><stop offset="0.6798" stop-color="#00224b"/><stop offset="0.7105" stop-color="#002148"/><stop offset="0.7412" stop-color="#002046"/><stop offset="0.7719" stop-color="#001f44"/><stop offset="0.8026" stop-color="#001e42"/><stop offset="0.8333" stop-color="#001d40"/><stop offset="0.8640" stop-color="#001c3f"/><stop offset="0.8947" stop-color="#001b3d"/><stop offset="0.9254" stop-color="#001a3b"/><stop offset="0.9561" stop-color="#00193a"/><stop offset="0.9868" stop-color="#001839"/></linearGradient><linearGradient id="c29" x1="0" y1="0" x2="0" y2="1"><stop offset="0.0000" stop-color="#00509b"/><stop offset="0.0263" stop-color="#00509b"/><stop offset="0.0526" stop-color="#00509b"/><stop offset="0.0789" stop-color="#00509b"/><stop offset="0.1053" stop-color="#00509b"/><stop offset="0.1316" stop-color="#004f99"/><stop offset="0.1579" stop-color="#004c95"/><stop offset="0.1842" stop-color="#004990"/><stop offset="0.2105" stop-color="#00468c"/><stop offset="0.2368" stop-color="#004589"/><stop offset="0.2632" stop-color="#00468b"/><stop offset="0.2895" stop-color="#00478d"/><stop offset="0.3158" stop-color="#00498f"/><stop offset="0.3412" stop-color="#004a91"/><stop offset="0.3434" stop-color="#0756a3"/><stop offset="0.3462" stop-color="#00326a"/><stop offset="0.3706" stop-color="#003269"/><stop offset="0.4013" stop-color="#003167"/><stop offset="0.4320" stop-color="#002f64"/><stop offset="0.4627" stop-color="#002e61"/><stop offset="0.4934" stop-color="#002c5e"/><stop offset="0.5241" stop-color="#002b5b"/><stop offset="0.5548" stop-color="#002a58"/><stop offset="0.5855" stop-color="#002855"/><stop offset="0.6162" stop-color="#002652"/><stop offset="0.6469" stop-color="#00254f"/><stop offset="0.6776" stop-color="#00234c"/><stop offset="0.7083" stop-color="#002149"/><stop offset="0.7390" stop-color="#002047"/><stop offset="0.7697" stop-color="#001f45"/><stop offset="0.8004" stop-color="#001e43"/><stop offset="0.8311" stop-color="#001d41"/><stop offset="0.8618" stop-color="#001c3f"/><stop offset="0.8925" stop-color="#001b3d"/><stop offset="0.9232" stop-color="#001a3c"/><stop offset="0.9539" stop-color="#00193a"/><stop offset="0.9846" stop-color="#001839"/></linearGradient><linearGradient id="c30" x1="0" y1="0" x2="0" y2="1"><stop offset="0.0000" stop-color="#00529e"/><stop offset="0.0263" stop-color="#00529e"/><stop offset="0.0526" stop-color="#00529e"/><stop offset="0.0789" stop-color="#00529e"/><stop offset="0.1053" stop-color="#00529e"/><stop offset="0.1316" stop-color="#00509c"/><stop offset="0.1579" stop-color="#004e98"/><stop offset="0.1842" stop-color="#004b94"/><stop offset="0.2105" stop-color="#004990"/><stop offset="0.2368" stop-color="#00478d"/><stop offset="0.2632" stop-color="#00498f"/><stop offset="0.2895" stop-color="#004a91"/><stop offset="0.3158" stop-color="#004c94"/><stop offset="0.3384" stop-color="#004d95"/><stop offset="0.3406" stop-color="#0859a7"/><stop offset="0.3435" stop-color="#00356e"/><stop offset="0.3662" stop-color="#00346d"/><stop offset="0.3969" stop-color="#00336b"/><stop offset="0.4276" stop-color="#003168"/><stop offset="0.4583" stop-color="#003064"/><stop offset="0.4890" stop-color="#002e61"/><stop offset="0.5197" stop-color="#002c5e"/><stop offset="0.5504" stop-color="#002b5b"/><stop offset="0.5811" stop-color="#002957"/><stop offset="0.6118" stop-color="#002754"/><stop offset="0.6425" stop-color="#002651"/><stop offset="0.6732" stop-color="#00244e"/><stop offset="0.7039" stop-color="#00224b"/><stop offset="0.7346" stop-color="#002148"/><stop offset="0.7654" stop-color="#002046"/><stop offset="0.7961" stop-color="#001f44"/><stop offset="0.8268" stop-color="#001e42"/><stop offset="0.8575" stop-color="#001d40"/><stop offset="0.8882" stop-color="#001c3e"/><stop offset="0.9189" stop-color="#001b3c"/><stop offset="0.9496" stop-color="#001a3b"/><stop offset="0.9803" stop-color="#001939"/></linearGradient><linearGradient id="c31" x1="0" y1="0" x2="0" y2="1"><stop offset="0.0000" stop-color="#0053a1"/><stop offset="0.0263" stop-color="#0053a1"/><stop offset="0.0526" stop-color="#0053a1"/><stop offset="0.0789" stop-color="#0053a1"/><stop offset="0.1053" stop-color="#0053a1"/><stop offset="0.1316" stop-color="#00529f"/><stop offset="0.1579" stop-color="#00509b"/><stop offset="0.1842" stop-color="#004d97"/><stop offset="0.2105" stop-color="#004b93"/><stop offset="0.2368" stop-color="#004a91"/><stop offset="0.2632" stop-color="#004b93"/><stop offset="0.2895" stop-color="#004d96"/><stop offset="0.3158" stop-color="#004e98"/><stop offset="0.3357" stop-color="#00509a"/><stop offset="0.3379" stop-color="#085bab"/><stop offset="0.3407" stop-color="#003771"/><stop offset="0.3640" stop-color="#003670"/><stop offset="0.3947" stop-color="#00356f"/><stop offset="0.4254" stop-color="#00336b"/><stop offset="0.4561" stop-color="#003268"/><stop offset="0.4868" stop-color="#003064"/><stop offset="0.5175" stop-color="#002e61"/><stop offset="0.5482" stop-color="#002c5d"/><stop offset="0.5789" stop-color="#002a5a"/><stop offset="0.6096" stop-color="#002856"/><stop offset="0.6404" stop-color="#002753"/><stop offset="0.6711" stop-color="#002550"/><stop offset="0.7018" stop-color="#00234c"/><stop offset="0.7325" stop-color="#002149"/><stop offset="0.7632" stop-color="#002047"/><stop offset="0.7939" stop-color="#001f45"/><stop offset="0.8246" stop-color="#001e43"/><stop offset="0.8553" stop-color="#001d41"/><stop offset="0.8860" stop-color="#001c3f"/><stop offset="0.9167" stop-color="#001b3d"/><stop offset="0.9474" stop-color="#001a3b"/><stop offset="0.9781" stop-color="#001939"/></linearGradient><linearGradient id="c32" x1="0" y1="0" x2="0" y2="1"><stop offset="0.0000" stop-color="#0055a3"/><stop offset="0.0263" stop-color="#0055a3"/><stop offset="0.0526" stop-color="#0055a3"/><stop offset="0.0789" stop-color="#0055a3"/><stop offset="0.1053" stop-color="#0055a3"/><stop offset="0.1316" stop-color="#0054a2"/><stop offset="0.1579" stop-color="#00529e"/><stop offset="0.1842" stop-color="#00509b"/><stop offset="0.2105" stop-color="#004d97"/><stop offset="0.2368" stop-color="#004c95"/><stop offset="0.2632" stop-color="#004e98"/><stop offset="0.2895" stop-color="#004f9a"/><stop offset="0.3158" stop-color="#00519d"/><stop offset="0.3329" stop-color="#00529f"/><stop offset="0.3351" stop-color="#085eaf"/><stop offset="0.3380" stop-color="#003975"/><stop offset="0.3618" stop-color="#003874"/><stop offset="0.3925" stop-color="#003772"/><stop offset="0.4232" stop-color="#00356f"/><stop offset="0.4539" stop-color="#00336b"/><stop offset="0.4846" stop-color="#003167"/><stop offset="0.5154" stop-color="#002f63"/><stop offset="0.5461" stop-color="#002d60"/><stop offset="0.5768" stop-color="#002b5c"/><stop offset="0.6075" stop-color="#002958"/><stop offset="0.6382" stop-color="#002755"/><stop offset="0.6689" stop-color="#002551"/><stop offset="0.6996" stop-color="#00244e"/><stop offset="0.7303" stop-color="#00224b"/><stop offset="0.7610" stop-color="#002148"/><stop offset="0.7917" stop-color="#002046"/><stop offset="0.8224" stop-color="#001f44"/><stop offset="0.8531" stop-color="#001e42"/><stop offset="0.8838" stop-color="#001c3f"/><stop offset="0.9145" stop-color="#001b3d"/><stop offset="0.9452" stop-color="#001a3b"/><stop offset="0.9759" stop-color="#00193a"/></linearGradient><linearGradient id="c33" x1="0" y1="0" x2="0" y2="1"><stop offset="0.0000" stop-color="#0057a6"/><stop offset="0.0263" stop-color="#0057a6"/><stop offset="0.0526" stop-color="#0057a6"/><stop offset="0.0789" stop-color="#0057a6"/><stop offset="0.1053" stop-color="#0057a6"/><stop offset="0.1316" stop-color="#0056a4"/><stop offset="0.1579" stop-color="#0054a1"/><stop offset="0.1842" stop-color="#00529e"/><stop offset="0.2105" stop-color="#00509b"/><stop offset="0.2368" stop-color="#004e99"/><stop offset="0.2632" stop-color="#00509c"/><stop offset="0.2895" stop-color="#00529f"/><stop offset="0.3158" stop-color="#0054a1"/><stop offset="0.3302" stop-color="#0055a3"/><stop offset="0.3323" stop-color="#0860b3"/><stop offset="0.3352" stop-color="#003b78"/><stop offset="0.3596" stop-color="#003a78"/><stop offset="0.3904" stop-color="#003a76"/><stop offset="0.4211" stop-color="#003772"/><stop offset="0.4518" stop-color="#00356e"/><stop offset="0.4825" stop-color="#00336a"/><stop offset="0.5132" stop-color="#003166"/><stop offset="0.5439" stop-color="#002e62"/><stop offset="0.5746" stop-color="#002c5e"/><stop offset="0.6053" stop-color="#002a5b"/><stop offset="0.6360" stop-color="#002857"/><stop offset="0.6667" stop-color="#002653"/><stop offset="0.6974" stop-color="#00244f"/><stop offset="0.7281" stop-color="#00224c"/><stop offset="0.7588" stop-color="#002149"/><stop offset="0.7895" stop-color="#002047"/><stop offset="0.8202" stop-color="#001f45"/><stop offset="0.8509" stop-color="#001e42"/><stop offset="0.8816" stop-color="#001d40"/><stop offset="0.9123" stop-color="#001c3e"/><stop offset="0.9430" stop-color="#001a3c"/><stop offset="0.9737" stop-color="#00193a"/></linearGradient><linearGradient id="c34" x1="0" y1="0" x2="0" y2="1"><stop offset="0.0000" stop-color="#0058a9"/><stop offset="0.0263" stop-color="#0058a9"/><stop offset="0.0526" stop-color="#0058a9"/><stop offset="0.0789" stop-color="#0058a9"/><stop offset="0.1053" stop-color="#0058a9"/><stop offset="0.1316" stop-color="#0058a7"/><stop offset="0.1579" stop-color="#0056a5"/><stop offset="0.1842" stop-color="#0054a2"/><stop offset="0.2105" stop-color="#00529f"/><stop offset="0.2368" stop-color="#00519e"/><stop offset="0.2632" stop-color="#0053a1"/><stop offset="0.2895" stop-color="#0055a3"/><stop offset="0.3158" stop-color="#0057a6"/><stop offset="0.3274" stop-color="#0058a8"/><stop offset="0.3296" stop-color="#0963b7"/><stop offset="0.3324" stop-color="#003d7b"/><stop offset="0.3553" stop-color="#003c7b"/><stop offset="0.3860" stop-color="#003c7a"/><stop offset="0.4167" stop-color="#003a76"/><stop offset="0.4474" stop-color="#003772"/><stop offset="0.4781" stop-color="#00356e"/><stop offset="0.5088" stop-color="#003269"/><stop offset="0.5395" stop-color="#003065"/><stop offset="0.5702" stop-color="#002d61"/><stop offset="0.6009" stop-color="#002b5d"/><stop offset="0.6316" stop-color="#002959"/><stop offset="0.6623" stop-color="#002755"/><stop offset="0.6930" stop-color="#002551"/><stop offset="0.7237" stop-color="#00234d"/><stop offset="0.7544" stop-color="#00224b"/><stop offset="0.7851" stop-color="#002148"/><stop offset="0.8158" stop-color="#002046"/><stop offset="0.8465" stop-color="#001f44"/><stop offset="0.8772" stop-color="#001e41"/><stop offset="0.9079" stop-color="#001c3f"/><stop offset="0.9386" stop-color="#001b3d"/><stop offset="0.9693" stop-color="#00193a"/><stop offset="1.0000" stop-color="#001838"/></linearGradient><linearGradient id="c35" x1="0" y1="0" x2="0" y2="1"><stop offset="0.0000" stop-color="#005aac"/><stop offset="0.0263" stop-color="#005aac"/><stop offset="0.0526" stop-color="#005aac"/><stop offset="0.0789" stop-color="#005aac"/><stop offset="0.1053" stop-color="#005aac"/><stop offset="0.1316" stop-color="#005aab"/><stop offset="0.1579" stop-color="#0058a9"/><stop offset="0.1842" stop-color="#0057a6"/><stop offset="0.2105" stop-color="#0055a4"/><stop offset="0.2368" stop-color="#0054a3"/><stop offset="0.2632" stop-color="#0056a6"/><stop offset="0.2895" stop-color="#0059a9"/><stop offset="0.3158" stop-color="#005bac"/><stop offset="0.3246" stop-color="#005bad"/><stop offset="0.3268" stop-color="#0965bb"/><stop offset="0.3297" stop-color="#003e7e"/><stop offset="0.3531" stop-color="#003e7d"/><stop offset="0.3838" stop-color="#003d7d"/><stop offset="0.4145" stop-color="#003b78"/><stop offset="0.4452" stop-color="#003974"/><stop offset="0.4759" stop-color="#003670"/><stop offset="0.5066" stop-color="#00346c"/><stop offset="0.5373" stop-color="#003168"/><stop offset="0.5680" stop-color="#002f64"/><stop offset="0.5987" stop-color="#002d60"/><stop offset="0.6294" stop-color="#002b5c"/><stop offset="0.6601" stop-color="#002958"/><stop offset="0.6908" stop-color="#002653"/><stop offset="0.7215" stop-color="#00244f"/><stop offset="0.7522" stop-color="#00234d"/><stop offset="0.7829" stop-color="#00224a"/><stop offset="0.8136" stop-color="#002148"/><stop offset="0.8443" stop-color="#001f45"/><stop offset="0.8750" stop-color="#001e43"/><stop offset="0.9057" stop-color="#001d40"/><stop offset="0.9364" stop-color="#001c3e"/><stop offset="0.9671" stop-color="#001a3c"/><stop offset="0.9978" stop-color="#001939"/></linearGradient><linearGradient id="c36" x1="0" y1="0" x2="0" y2="1"><stop offset="0.0000" stop-color="#005caf"/><stop offset="0.0263" stop-color="#005caf"/><stop offset="0.0526" stop-color="#005caf"/><stop offset="0.0789" stop-color="#005caf"/><stop offset="0.1053" stop-color="#005caf"/><stop offset="0.1316" stop-color="#005cae"/><stop offset="0.1579" stop-color="#005bad"/><stop offset="0.1842" stop-color="#0059ab"/><stop offset="0.2105" stop-color="#0058a9"/><stop offset="0.2368" stop-color="#0058a8"/><stop offset="0.2632" stop-color="#005aab"/><stop offset="0.2895" stop-color="#005cae"/><stop offset="0.3158" stop-color="#005eb2"/><stop offset="0.3219" stop-color="#005fb2"/><stop offset="0.3241" stop-color="#0968bf"/><stop offset="0.3269" stop-color="#004080"/><stop offset="0.3509" stop-color="#003f80"/><stop offset="0.3816" stop-color="#003f7f"/><stop offset="0.4123" stop-color="#003c7b"/><stop offset="0.4430" stop-color="#003a77"/><stop offset="0.4737" stop-color="#003873"/><stop offset="0.5044" stop-color="#00356f"/><stop offset="0.5351" stop-color="#00336b"/><stop offset="0.5658" stop-color="#003167"/><stop offset="0.5965" stop-color="#002e63"/><stop offset="0.6272" stop-color="#002c5e"/><stop offset="0.6579" stop-color="#002a5a"/><stop offset="0.6886" stop-color="#002756"/><stop offset="0.7193" stop-color="#002552"/><stop offset="0.7500" stop-color="#00244f"/><stop offset="0.7807" stop-color="#00234c"/><stop offset="0.8114" stop-color="#00214a"/><stop offset="0.8421" stop-color="#002047"/><stop offset="0.8728" stop-color="#001f45"/><stop offset="0.9035" stop-color="#001e42"/><stop offset="0.9342" stop-color="#001c40"/><stop offset="0.9649" stop-color="#001b3d"/><stop offset="0.9956" stop-color="#001a3a"/></linearGradient><linearGradient id="c37" x1="0" y1="0" x2="0" y2="1"><stop offset="0.0000" stop-color="#005eb3"/><stop offset="0.0263" stop-color="#005eb3"/><stop offset="0.0526" stop-color="#005eb3"/><stop offset="0.0789" stop-color="#005eb3"/><stop offset="0.1053" stop-color="#005eb3"/><stop offset="0.1316" stop-color="#005eb2"/><stop offset="0.1579" stop-color="#005db1"/><stop offset="0.1842" stop-color="#005caf"/><stop offset="0.2105" stop-color="#005bae"/><stop offset="0.2368" stop-color="#005bae"/><stop offset="0.2632" stop-color="#005db1"/><stop offset="0.2895" stop-color="#0060b4"/><stop offset="0.3158" stop-color="#0062b7"/><stop offset="0.3191" stop-color="#0062b8"/><stop offset="0.3213" stop-color="#096bc4"/><stop offset="0.3241" stop-color="#004183"/><stop offset="0.3487" stop-color="#004082"/><stop offset="0.3794" stop-color="#004081"/><stop offset="0.4101" stop-color="#003e7d"/><stop offset="0.4408" stop-color="#003b7a"/><stop offset="0.4715" stop-color="#003976"/><stop offset="0.5022" stop-color="#003772"/><stop offset="0.5329" stop-color="#00356e"/><stop offset="0.5636" stop-color="#00326a"/><stop offset="0.5943" stop-color="#003065"/><stop offset="0.6250" stop-color="#002d61"/><stop offset="0.6557" stop-color="#002b5c"/><stop offset="0.6864" stop-color="#002958"/><stop offset="0.7171" stop-color="#002654"/><stop offset="0.7478" stop-color="#002551"/><stop offset="0.7785" stop-color="#00244e"/><stop offset="0.8092" stop-color="#00224c"/><stop offset="0.8399" stop-color="#002149"/><stop offset="0.8706" stop-color="#002046"/><stop offset="0.9013" stop-color="#001f44"/><stop offset="0.9320" stop-color="#001d41"/><stop offset="0.9627" stop-color="#001c3e"/><stop offset="0.9934" stop-color="#001a3c"/></linearGradient><linearGradient id="c38" x1="0" y1="0" x2="0" y2="1"><stop offset="0.0000" stop-color="#0060b6"/><stop offset="0.0263" stop-color="#0060b6"/><stop offset="0.0526" stop-color="#0060b6"/><stop offset="0.0789" stop-color="#0060b6"/><stop offset="0.1053" stop-color="#0060b6"/><stop offset="0.1316" stop-color="#0060b6"/><stop offset="0.1579" stop-color="#005fb5"/><stop offset="0.1842" stop-color="#005fb4"/><stop offset="0.2105" stop-color="#005eb3"/><stop offset="0.2368" stop-color="#005fb3"/><stop offset="0.2632" stop-color="#0061b6"/><stop offset="0.2895" stop-color="#0063ba"/><stop offset="0.3163" stop-color="#0066bd"/><stop offset="0.3185" stop-color="#0a6ec8"/><stop offset="0.3214" stop-color="#004285"/><stop offset="0.3443" stop-color="#004284"/><stop offset="0.3750" stop-color="#004183"/><stop offset="0.4057" stop-color="#003f80"/><stop offset="0.4364" stop-color="#003d7c"/><stop offset="0.4671" stop-color="#003b79"/><stop offset="0.4978" stop-color="#003975"/><stop offset="0.5285" stop-color="#003671"/><stop offset="0.5592" stop-color="#00346d"/><stop offset="0.5899" stop-color="#003168"/><stop offset="0.6206" stop-color="#002f64"/><stop offset="0.6513" stop-color="#002c5f"/><stop offset="0.6820" stop-color="#002a5b"/><stop offset="0.7127" stop-color="#002756"/><stop offset="0.7434" stop-color="#002653"/><stop offset="0.7741" stop-color="#002550"/><stop offset="0.8048" stop-color="#00234e"/><stop offset="0.8355" stop-color="#00224b"/><stop offset="0.8662" stop-color="#002148"/><stop offset="0.8969" stop-color="#002046"/><stop offset="0.9276" stop-color="#001e43"/><stop offset="0.9583" stop-color="#001d40"/><stop offset="0.9890" stop-color="#001b3d"/></linearGradient><linearGradient id="c39" x1="0" y1="0" x2="0" y2="1"><stop offset="0.0000" stop-color="#0062b9"/><stop offset="0.0263" stop-color="#0062b9"/><stop offset="0.0526" stop-color="#0062b9"/><stop offset="0.0789" stop-color="#0062b9"/><stop offset="0.1053" stop-color="#0062b9"/><stop offset="0.1316" stop-color="#0062b9"/><stop offset="0.1579" stop-color="#0062b9"/><stop offset="0.1842" stop-color="#0062b8"/><stop offset="0.2105" stop-color="#0061b8"/><stop offset="0.2368" stop-color="#0062b8"/><stop offset="0.2632" stop-color="#0065bc"/><stop offset="0.2895" stop-color="#0067bf"/><stop offset="0.3136" stop-color="#0069c2"/><stop offset="0.3158" stop-color="#0a70cc"/><stop offset="0.3186" stop-color="#004488"/><stop offset="0.3421" stop-color="#004387"/><stop offset="0.3728" stop-color="#004286"/><stop offset="0.4035" stop-color="#004183"/><stop offset="0.4342" stop-color="#003f7f"/><stop offset="0.4649" stop-color="#003c7b"/><stop offset="0.4956" stop-color="#003a77"/><stop offset="0.5263" stop-color="#003874"/><stop offset="0.5570" stop-color="#003670"/><stop offset="0.5877" stop-color="#00336b"/><stop offset="0.6184" stop-color="#003067"/><stop offset="0.6491" stop-color="#002e62"/><stop offset="0.6798" stop-color="#002b5d"/><stop offset="0.7105" stop-color="#002858"/><stop offset="0.7412" stop-color="#002755"/><stop offset="0.7719" stop-color="#002552"/><stop offset="0.8026" stop-color="#00244f"/><stop offset="0.8333" stop-color="#00234d"/><stop offset="0.8640" stop-color="#00224a"/><stop offset="0.8947" stop-color="#002047"/><stop offset="0.9254" stop-color="#001f44"/><stop offset="0.9561" stop-color="#001d41"/><stop offset="0.9868" stop-color="#001c3e"/></linearGradient><linearGradient id="c40" x1="0" y1="0" x2="0" y2="1"><stop offset="0.0000" stop-color="#0064bd"/><stop offset="0.0263" stop-color="#0064bd"/><stop offset="0.0526" stop-color="#0064bd"/><stop offset="0.0789" stop-color="#0064bd"/><stop offset="0.1053" stop-color="#0064bd"/><stop offset="0.1316" stop-color="#0064bd"/><stop offset="0.1579" stop-color="#0064bd"/><stop offset="0.1842" stop-color="#0064bd"/><stop offset="0.2105" stop-color="#0065bd"/><stop offset="0.2368" stop-color="#0065bd"/><stop offset="0.2632" stop-color="#0068c1"/><stop offset="0.2895" stop-color="#006bc5"/><stop offset="0.3108" stop-color="#006dc8"/><stop offset="0.3130" stop-color="#0a73cf"/><stop offset="0.3159" stop-color="#00458a"/><stop offset="0.3399" stop-color="#004589"/><stop offset="0.3706" stop-color="#004488"/><stop offset="0.4013" stop-color="#004285"/><stop offset="0.4320" stop-color="#004082"/><stop offset="0.4627" stop-color="#003e7e"/><stop offset="0.4934" stop-color="#003c7a"/><stop offset="0.5241" stop-color="#003976"/><stop offset="0.5548" stop-color="#003773"/><stop offset="0.5855" stop-color="#00356e"/><stop offset="0.6162" stop-color="#003269"/><stop offset="0.6469" stop-color="#002f64"/><stop offset="0.6776" stop-color="#002c5f"/><stop offset="0.7083" stop-color="#002a5b"/><stop offset="0.7390" stop-color="#002857"/><stop offset="0.7697" stop-color="#002654"/><stop offset="0.8004" stop-color="#002551"/><stop offset="0.8311" stop-color="#00244f"/><stop offset="0.8618" stop-color="#00234c"/><stop offset="0.8925" stop-color="#002149"/><stop offset="0.9232" stop-color="#002046"/><stop offset="0.9539" stop-color="#001e43"/><stop offset="0.9846" stop-color="#001c40"/></linearGradient><linearGradient id="c41" x1="0" y1="0" x2="0" y2="1"><stop offset="0.0000" stop-color="#0066c0"/><stop offset="0.0263" stop-color="#0066c0"/><stop offset="0.0526" stop-color="#0066c0"/><stop offset="0.0789" stop-color="#0066c0"/><stop offset="0.1053" stop-color="#0066c0"/><stop offset="0.1316" stop-color="#0066c0"/><stop offset="0.1579" stop-color="#0067c1"/><stop offset="0.1842" stop-color="#0067c1"/><stop offset="0.2105" stop-color="#0068c2"/><stop offset="0.2368" stop-color="#0069c3"/><stop offset="0.2632" stop-color="#006cc6"/><stop offset="0.2895" stop-color="#006eca"/><stop offset="0.3080" stop-color="#0070cd"/><stop offset="0.3102" stop-color="#0a75d3"/><stop offset="0.3131" stop-color="#00478d"/><stop offset="0.3355" stop-color="#00468c"/><stop offset="0.3662" stop-color="#00458a"/><stop offset="0.3969" stop-color="#004488"/><stop offset="0.4276" stop-color="#004284"/><stop offset="0.4583" stop-color="#003f81"/><stop offset="0.4890" stop-color="#003d7d"/><stop offset="0.5197" stop-color="#003b7a"/><stop offset="0.5504" stop-color="#003976"/><stop offset="0.5811" stop-color="#003671"/><stop offset="0.6118" stop-color="#00336c"/><stop offset="0.6425" stop-color="#003167"/><stop offset="0.6732" stop-color="#002e62"/><stop offset="0.7039" stop-color="#002b5d"/><stop offset="0.7346" stop-color="#002959"/><stop offset="0.7654" stop-color="#002756"/><stop offset="0.7961" stop-color="#002653"/><stop offset="0.8268" stop-color="#002551"/><stop offset="0.8575" stop-color="#00234e"/><stop offset="0.8882" stop-color="#00224b"/><stop offset="0.9189" stop-color="#002148"/><stop offset="0.9496" stop-color="#001f44"/><stop offset="0.9803" stop-color="#001d41"/></linearGradient><linearGradient id="c42" x1="0" y1="0" x2="0" y2="1"><stop offset="0.0000" stop-color="#0068c3"/><stop offset="0.0263" stop-color="#0068c3"/><stop offset="0.0526" stop-color="#0068c3"/><stop offset="0.0789" stop-color="#0068c3"/><stop offset="0.1053" stop-color="#0068c3"/><stop offset="0.1316" stop-color="#0068c4"/><stop offset="0.1579" stop-color="#0069c5"/><stop offset="0.1842" stop-color="#006ac6"/><stop offset="0.2105" stop-color="#006bc6"/><stop offset="0.2368" stop-color="#006cc8"/><stop offset="0.2632" stop-color="#006fcc"/><stop offset="0.2895" stop-color="#0072d0"/><stop offset="0.3053" stop-color="#0074d2"/><stop offset="0.3075" stop-color="#0b78d7"/><stop offset="0.3103" stop-color="#004890"/><stop offset="0.3333" stop-color="#00488e"/><stop offset="0.3640" stop-color="#00478d"/><stop offset="0.3947" stop-color="#00458a"/><stop offset="0.4254" stop-color="#004387"/><stop offset="0.4561" stop-color="#004183"/><stop offset="0.4868" stop-color="#003f80"/><stop offset="0.5175" stop-color="#003d7c"/><stop offset="0.5482" stop-color="#003b79"/><stop offset="0.5789" stop-color="#003874"/><stop offset="0.6096" stop-color="#00356f"/><stop offset="0.6404" stop-color="#00326a"/><stop offset="0.6711" stop-color="#002f65"/><stop offset="0.7018" stop-color="#002c5f"/><stop offset="0.7325" stop-color="#00295b"/><stop offset="0.7632" stop-color="#002858"/><stop offset="0.7939" stop-color="#002755"/><stop offset="0.8246" stop-color="#002653"/><stop offset="0.8553" stop-color="#002450"/><stop offset="0.8860" stop-color="#00234d"/><stop offset="0.9167" stop-color="#002149"/><stop offset="0.9474" stop-color="#002046"/><stop offset="0.9781" stop-color="#001e42"/></linearGradient><linearGradient id="c43" x1="0" y1="0" x2="0" y2="1"><stop offset="0.0000" stop-color="#0069c5"/><stop offset="0.0263" stop-color="#0069c5"/><stop offset="0.0526" stop-color="#0069c5"/><stop offset="0.0789" stop-color="#0069c5"/><stop offset="0.1053" stop-color="#0069c5"/><stop offset="0.1316" stop-color="#0069c6"/><stop offset="0.1579" stop-color="#006bc7"/><stop offset="0.1842" stop-color="#006cc9"/><stop offset="0.2105" stop-color="#006eca"/><stop offset="0.2368" stop-color="#006fcc"/><stop offset="0.2632" stop-color="#0072d0"/><stop offset="0.2895" stop-color="#0075d3"/><stop offset="0.3025" stop-color="#0076d5"/><stop offset="0.3047" stop-color="#0b7ad9"/><stop offset="0.3076" stop-color="#004991"/><stop offset="0.3311" stop-color="#004890"/><stop offset="0.3618" stop-color="#00478e"/><stop offset="0.3925" stop-color="#00468c"/><stop offset="0.4232" stop-color="#004488"/><stop offset="0.4539" stop-color="#004285"/><stop offset="0.4846" stop-color="#004081"/><stop offset="0.5154" stop-color="#003e7e"/><stop offset="0.5461" stop-color="#003b7a"/><stop offset="0.5768" stop-color="#003976"/><stop offset="0.6075" stop-color="#003671"/><stop offset="0.6382" stop-color="#00336c"/><stop offset="0.6689" stop-color="#003067"/><stop offset="0.6996" stop-color="#002d62"/><stop offset="0.7303" stop-color="#002b5d"/><stop offset="0.7610" stop-color="#00295a"/><stop offset="0.7917" stop-color="#002857"/><stop offset="0.8224" stop-color="#002654"/><stop offset="0.8531" stop-color="#002551"/><stop offset="0.8838" stop-color="#00244e"/><stop offset="0.9145" stop-color="#00224a"/><stop offset="0.9452" stop-color="#002047"/><stop offset="0.9759" stop-color="#001f43"/></linearGradient><linearGradient id="c44" x1="0" y1="0" x2="0" y2="1"><stop offset="0.0000" stop-color="#006ac7"/><stop offset="0.0263" stop-color="#006ac7"/><stop offset="0.0526" stop-color="#006ac7"/><stop offset="0.0789" stop-color="#006ac7"/><stop offset="0.1053" stop-color="#006ac7"/><stop offset="0.1316" stop-color="#006bc7"/><stop offset="0.1579" stop-color="#006dc9"/><stop offset="0.1842" stop-color="#006fcc"/><stop offset="0.2105" stop-color="#0071ce"/><stop offset="0.2368" stop-color="#0073d0"/><stop offset="0.2632" stop-color="#0075d3"/><stop offset="0.2895" stop-color="#0078d7"/><stop offset="0.2998" stop-color="#0079d8"/><stop offset="0.3020" stop-color="#0b7cdb"/><stop offset="0.3048" stop-color="#004a92"/><stop offset="0.3289" stop-color="#004991"/><stop offset="0.3596" stop-color="#00488f"/><stop offset="0.3904" stop-color="#00468d"/><stop offset="0.4211" stop-color="#004489"/><stop offset="0.4518" stop-color="#004286"/><stop offset="0.4825" stop-color="#004082"/><stop offset="0.5132" stop-color="#003e7f"/><stop offset="0.5439" stop-color="#003c7b"/><stop offset="0.5746" stop-color="#003a77"/><stop offset="0.6053" stop-color="#003772"/><stop offset="0.6360" stop-color="#00346d"/><stop offset="0.6667" stop-color="#003168"/><stop offset="0.6974" stop-color="#002e64"/><stop offset="0.7281" stop-color="#002c5f"/><stop offset="0.7588" stop-color="#002a5c"/><stop offset="0.7895" stop-color="#002958"/><stop offset="0.8202" stop-color="#002755"/><stop offset="0.8509" stop-color="#002652"/><stop offset="0.8816" stop-color="#00244e"/><stop offset="0.9123" stop-color="#00224b"/><stop offset="0.9430" stop-color="#002147"/><stop offset="0.9737" stop-color="#001f44"/></linearGradient><linearGradient id="c45" x1="0" y1="0" x2="0" y2="1"><stop offset="0.0000" stop-color="#006bc8"/><stop offset="0.0263" stop-color="#006bc8"/><stop offset="0.0526" stop-color="#006bc8"/><stop offset="0.0789" stop-color="#006bc8"/><stop offset="0.1053" stop-color="#006bc8"/><stop offset="0.1316" stop-color="#006cc9"/><stop offset="0.1579" stop-color="#006ecc"/><stop offset="0.1842" stop-color="#0071ce"/><stop offset="0.2105" stop-color="#0074d1"/><stop offset="0.2368" stop-color="#0076d4"/><stop offset="0.2632" stop-color="#0079d7"/><stop offset="0.2895" stop-color="#007bda"/><stop offset="0.2970" stop-color="#007cdb"/><stop offset="0.2992" stop-color="#0b7ddd"/><stop offset="0.3020" stop-color="#004b93"/><stop offset="0.3246" stop-color="#004a92"/><stop offset="0.3553" stop-color="#004990"/><stop offset="0.3860" stop-color="#00478e"/><stop offset="0.4167" stop-color="#00458a"/><stop offset="0.4474" stop-color="#004387"/><stop offset="0.4781" stop-color="#004184"/><stop offset="0.5088" stop-color="#003f80"/><stop offset="0.5395" stop-color="#003d7d"/><stop offset="0.5702" stop-color="#003b79"/><stop offset="0.6009" stop-color="#003874"/><stop offset="0.6316" stop-color="#00356f"/><stop offset="0.6623" stop-color="#00336b"/><stop offset="0.6930" stop-color="#003066"/><stop offset="0.7237" stop-color="#002d61"/><stop offset="0.7544" stop-color="#002b5e"/><stop offset="0.7851" stop-color="#002a5a"/><stop offset="0.8158" stop-color="#002856"/><stop offset="0.8465" stop-color="#002653"/><stop offset="0.8772" stop-color="#00254f"/><stop offset="0.9079" stop-color="#00234c"/><stop offset="0.9386" stop-color="#002148"/><stop offset="0.9693" stop-color="#001f45"/><stop offset="1.0000" stop-color="#001e41"/></linearGradient><linearGradient id="c46" x1="0" y1="0" x2="0" y2="1"><stop offset="0.0000" stop-color="#006cca"/><stop offset="0.0263" stop-color="#006cca"/><stop offset="0.0526" stop-color="#006cca"/><stop offset="0.0789" stop-color="#006cca"/><stop offset="0.1053" stop-color="#006cca"/><stop offset="0.1316" stop-color="#006dcb"/><stop offset="0.1579" stop-color="#0070ce"/><stop offset="0.1842" stop-color="#0073d1"/><stop offset="0.2105" stop-color="#0077d4"/><stop offset="0.2368" stop-color="#0079d7"/><stop offset="0.2632" stop-color="#007cda"/><stop offset="0.2895" stop-color="#007edd"/><stop offset="0.2942" stop-color="#007fde"/><stop offset="0.2964" stop-color="#0c7fdf"/><stop offset="0.2993" stop-color="#004c95"/><stop offset="0.3224" stop-color="#004b93"/><stop offset="0.3531" stop-color="#004991"/><stop offset="0.3838" stop-color="#00488f"/><stop offset="0.4145" stop-color="#00468b"/><stop offset="0.4452" stop-color="#004488"/><stop offset="0.4759" stop-color="#004285"/><stop offset="0.5066" stop-color="#004081"/><stop offset="0.5373" stop-color="#003e7e"/><stop offset="0.5680" stop-color="#003c7a"/><stop offset="0.5987" stop-color="#003976"/><stop offset="0.6294" stop-color="#003771"/><stop offset="0.6601" stop-color="#00346c"/><stop offset="0.6908" stop-color="#003168"/><stop offset="0.7215" stop-color="#002e63"/><stop offset="0.7522" stop-color="#002c5f"/><stop offset="0.7829" stop-color="#002b5c"/><stop offset="0.8136" stop-color="#002958"/><stop offset="0.8443" stop-color="#002754"/><stop offset="0.8750" stop-color="#002550"/><stop offset="0.9057" stop-color="#00234c"/><stop offset="0.9364" stop-color="#002249"/><stop offset="0.9671" stop-color="#002046"/><stop offset="0.9978" stop-color="#001e42"/></linearGradient><linearGradient id="c47" x1="0" y1="0" x2="0" y2="1"><stop offset="0.0000" stop-color="#006dcb"/><stop offset="0.0263" stop-color="#006dcb"/><stop offset="0.0526" stop-color="#006dcb"/><stop offset="0.0789" stop-color="#006dcb"/><stop offset="0.1053" stop-color="#006dcb"/><stop offset="0.1316" stop-color="#006ecd"/><stop offset="0.1579" stop-color="#0072d0"/><stop offset="0.1842" stop-color="#0076d4"/><stop offset="0.2105" stop-color="#0079d8"/><stop offset="0.2368" stop-color="#007ddb"/><stop offset="0.2632" stop-color="#007fde"/><stop offset="0.2895" stop-color="#0081e1"/><stop offset="0.2915" stop-color="#0082e1"/><stop offset="0.2937" stop-color="#0c81e1"/><stop offset="0.2965" stop-color="#004c96"/><stop offset="0.3202" stop-color="#004b94"/><stop offset="0.3509" stop-color="#004a92"/><stop offset="0.3816" stop-color="#004890"/><stop offset="0.4123" stop-color="#00478c"/><stop offset="0.4430" stop-color="#004589"/><stop offset="0.4737" stop-color="#004386"/><stop offset="0.5044" stop-color="#004183"/><stop offset="0.5351" stop-color="#003f7f"/><stop offset="0.5658" stop-color="#003d7c"/><stop offset="0.5965" stop-color="#003a77"/><stop offset="0.6272" stop-color="#003873"/><stop offset="0.6579" stop-color="#00356e"/><stop offset="0.6886" stop-color="#00326a"/><stop offset="0.7193" stop-color="#003065"/><stop offset="0.7500" stop-color="#002e61"/><stop offset="0.7807" stop-color="#002c5d"/><stop offset="0.8114" stop-color="#002a59"/><stop offset="0.8421" stop-color="#002855"/><stop offset="0.8728" stop-color="#002651"/><stop offset="0.9035" stop-color="#00244d"/><stop offset="0.9342" stop-color="#00224a"/><stop offset="0.9649" stop-color="#002046"/><stop offset="0.9956" stop-color="#001e43"/></linearGradient><linearGradient id="c48" x1="0" y1="0" x2="0" y2="1"><stop offset="0.0000" stop-color="#006ecc"/><stop offset="0.0263" stop-color="#006ecc"/><stop offset="0.0526" stop-color="#006ecc"/><stop offset="0.0789" stop-color="#006ecc"/><stop offset="0.1053" stop-color="#006ecc"/><stop offset="0.1316" stop-color="#006fce"/><stop offset="0.1579" stop-color="#0074d3"/><stop offset="0.1842" stop-color="#0078d7"/><stop offset="0.2105" stop-color="#007cdb"/><stop offset="0.2368" stop-color="#0080df"/><stop offset="0.2632" stop-color="#0082e2"/><stop offset="0.2887" stop-color="#0085e4"/><stop offset="0.2909" stop-color="#0c83e3"/><stop offset="0.2937" stop-color="#004d97"/><stop offset="0.3180" stop-color="#004c95"/><stop offset="0.3487" stop-color="#004b93"/><stop offset="0.3794" stop-color="#004991"/><stop offset="0.4101" stop-color="#00478d"/><stop offset="0.4408" stop-color="#00458a"/><stop offset="0.4715" stop-color="#004487"/><stop offset="0.5022" stop-color="#004284"/><stop offset="0.5329" stop-color="#004080"/><stop offset="0.5636" stop-color="#003e7d"/><stop offset="0.5943" stop-color="#003b79"/><stop offset="0.6250" stop-color="#003974"/><stop offset="0.6557" stop-color="#003670"/><stop offset="0.6864" stop-color="#00336c"/><stop offset="0.7171" stop-color="#003167"/><stop offset="0.7478" stop-color="#002f63"/><stop offset="0.7785" stop-color="#002d5f"/><stop offset="0.8092" stop-color="#002a5a"/><stop offset="0.8399" stop-color="#002856"/><stop offset="0.8706" stop-color="#002652"/><stop offset="0.9013" stop-color="#00244e"/><stop offset="0.9320" stop-color="#00224a"/><stop offset="0.9627" stop-color="#002147"/><stop offset="0.9934" stop-color="#001f44"/></linearGradient><linearGradient id="c49" x1="0" y1="0" x2="0" y2="1"><stop offset="0.0000" stop-color="#006fce"/><stop offset="0.0263" stop-color="#006fce"/><stop offset="0.0526" stop-color="#006fce"/><stop offset="0.0789" stop-color="#006fce"/><stop offset="0.1053" stop-color="#006fce"/><stop offset="0.1316" stop-color="#0071d0"/><stop offset="0.1579" stop-color="#0075d5"/><stop offset="0.1842" stop-color="#007ada"/><stop offset="0.2105" stop-color="#007fdf"/><stop offset="0.2368" stop-color="#0083e3"/><stop offset="0.2632" stop-color="#0086e5"/><stop offset="0.2859" stop-color="#0087e7"/><stop offset="0.2881" stop-color="#0c85e4"/><stop offset="0.2910" stop-color="#004e99"/><stop offset="0.3136" stop-color="#004d97"/><stop offset="0.3443" stop-color="#004b94"/><stop offset="0.3750" stop-color="#004a92"/><stop offset="0.4057" stop-color="#00488f"/><stop offset="0.4364" stop-color="#00468b"/><stop offset="0.4671" stop-color="#004488"/><stop offset="0.4978" stop-color="#004385"/><stop offset="0.5285" stop-color="#004182"/><stop offset="0.5592" stop-color="#003f7f"/><stop offset="0.5899" stop-color="#003c7a"/><stop offset="0.6206" stop-color="#003a76"/><stop offset="0.6513" stop-color="#003772"/><stop offset="0.6820" stop-color="#00356e"/><stop offset="0.7127" stop-color="#00326a"/><stop offset="0.7434" stop-color="#003065"/><stop offset="0.7741" stop-color="#002e61"/><stop offset="0.8048" stop-color="#002b5c"/><stop offset="0.8355" stop-color="#002957"/><stop offset="0.8662" stop-color="#002753"/><stop offset="0.8969" stop-color="#00254f"/><stop offset="0.9276" stop-color="#00234b"/><stop offset="0.9583" stop-color="#002148"/><stop offset="0.9890" stop-color="#001f44"/></linearGradient><linearGradient id="c50" x1="0" y1="0" x2="0" y2="1"><stop offset="0.0000" stop-color="#0070cf"/><stop offset="0.0263" stop-color="#0070cf"/><stop offset="0.0526" stop-color="#0070cf"/><stop offset="0.0789" stop-color="#0070cf"/><stop offset="0.1053" stop-color="#0070cf"/><stop offset="0.1316" stop-color="#0072d2"/><stop offset="0.1579" stop-color="#0077d7"/><stop offset="0.1842" stop-color="#007ddd"/><stop offset="0.2105" stop-color="#0082e2"/><stop offset="0.2368" stop-color="#0087e7"/><stop offset="0.2632" stop-color="#0089e9"/><stop offset="0.2832" stop-color="#008aea"/><stop offset="0.2854" stop-color="#0d86e6"/><stop offset="0.2882" stop-color="#004f9a"/><stop offset="0.3114" stop-color="#004e98"/><stop offset="0.3421" stop-color="#004c95"/><stop offset="0.3728" stop-color="#004a93"/><stop offset="0.4035" stop-color="#004990"/><stop offset="0.4342" stop-color="#00478c"/><stop offset="0.4649" stop-color="#004589"/><stop offset="0.4956" stop-color="#004386"/><stop offset="0.5263" stop-color="#004283"/><stop offset="0.5570" stop-color="#004080"/><stop offset="0.5877" stop-color="#003d7c"/><stop offset="0.6184" stop-color="#003b78"/><stop offset="0.6491" stop-color="#003874"/><stop offset="0.6798" stop-color="#003670"/><stop offset="0.7105" stop-color="#00346c"/><stop offset="0.7412" stop-color="#003167"/><stop offset="0.7719" stop-color="#002f62"/><stop offset="0.8026" stop-color="#002c5d"/><stop offset="0.8333" stop-color="#002a59"/><stop offset="0.8640" stop-color="#002854"/><stop offset="0.8947" stop-color="#00254f"/><stop offset="0.9254" stop-color="#00244c"/><stop offset="0.9561" stop-color="#002248"/><stop offset="0.9868" stop-color="#002045"/></linearGradient><linearGradient id="c51" x1="0" y1="0" x2="0" y2="1"><stop offset="0.0000" stop-color="#0070d0"/><stop offset="0.0263" stop-color="#0070d0"/><stop offset="0.0526" stop-color="#0070d0"/><stop offset="0.0789" stop-color="#0070d0"/><stop offset="0.1053" stop-color="#0070d0"/><stop offset="0.1316" stop-color="#0072d2"/><stop offset="0.1579" stop-color="#0078d8"/><stop offset="0.1842" stop-color="#007ede"/><stop offset="0.2105" stop-color="#0084e4"/><stop offset="0.2368" stop-color="#0088e8"/><stop offset="0.2632" stop-color="#008aea"/><stop offset="0.2804" stop-color="#008cec"/><stop offset="0.2826" stop-color="#0d87e7"/><stop offset="0.2855" stop-color="#004f9b"/><stop offset="0.3092" stop-color="#004e99"/><stop offset="0.3399" stop-color="#004c96"/><stop offset="0.3706" stop-color="#004b93"/><stop offset="0.4013" stop-color="#004990"/><stop offset="0.4320" stop-color="#00478d"/><stop offset="0.4627" stop-color="#00468a"/><stop offset="0.4934" stop-color="#004487"/><stop offset="0.5241" stop-color="#004284"/><stop offset="0.5548" stop-color="#004080"/><stop offset="0.5855" stop-color="#003e7d"/><stop offset="0.6162" stop-color="#003b79"/><stop offset="0.6469" stop-color="#003975"/><stop offset="0.6776" stop-color="#003771"/><stop offset="0.7083" stop-color="#00346d"/><stop offset="0.7390" stop-color="#003268"/><stop offset="0.7697" stop-color="#002f63"/><stop offset="0.8004" stop-color="#002d5e"/><stop offset="0.8311" stop-color="#002b59"/><stop offset="0.8618" stop-color="#002854"/><stop offset="0.8925" stop-color="#002650"/><stop offset="0.9232" stop-color="#00244c"/><stop offset="0.9539" stop-color="#002249"/><stop offset="0.9846" stop-color="#002046"/></linearGradient></defs><g filter="url(#bh)"><rect x="-12" y="545" width="13" height="456" fill="url(#c0)"/><rect x="0" y="545" width="13" height="456" fill="url(#c1)"/><rect x="12" y="545" width="13" height="456" fill="url(#c2)"/><rect x="24" y="545" width="13" height="456" fill="url(#c3)"/><rect x="36" y="545" width="13" height="456" fill="url(#c4)"/><rect x="48" y="545" width="13" height="456" fill="url(#c5)"/><rect x="60" y="545" width="13" height="456" fill="url(#c6)"/><rect x="72" y="545" width="13" height="456" fill="url(#c7)"/><rect x="84" y="545" width="13" height="456" fill="url(#c8)"/><rect x="96" y="545" width="13" height="456" fill="url(#c9)"/><rect x="108" y="545" width="13" height="456" fill="url(#c10)"/><rect x="120" y="545" width="13" height="456" fill="url(#c11)"/><rect x="132" y="545" width="13" height="456" fill="url(#c12)"/><rect x="144" y="545" width="13" height="456" fill="url(#c13)"/><rect x="156" y="545" width="13" height="456" fill="url(#c14)"/><rect x="168" y="545" width="13" height="456" fill="url(#c15)"/><rect x="180" y="545" width="13" height="456" fill="url(#c16)"/><rect x="192" y="545" width="13" height="456" fill="url(#c17)"/><rect x="204" y="545" width="13" height="456" fill="url(#c18)"/><rect x="216" y="545" width="13" height="456" fill="url(#c19)"/><rect x="228" y="545" width="13" height="456" fill="url(#c20)"/><rect x="240" y="545" width="13" height="456" fill="url(#c21)"/><rect x="252" y="545" width="13" height="456" fill="url(#c22)"/><rect x="264" y="545" width="13" height="456" fill="url(#c23)"/><rect x="276" y="545" width="13" height="456" fill="url(#c24)"/><rect x="288" y="545" width="13" height="456" fill="url(#c25)"/><rect x="300" y="545" width="13" height="456" fill="url(#c26)"/><rect x="312" y="545" width="13" height="456" fill="url(#c27)"/><rect x="324" y="545" width="13" height="456" fill="url(#c28)"/><rect x="336" y="545" width="13" height="456" fill="url(#c29)"/><rect x="348" y="545" width="13" height="456" fill="url(#c30)"/><rect x="360" y="545" width="13" height="456" fill="url(#c31)"/><rect x="372" y="545" width="13" height="456" fill="url(#c32)"/><rect x="384" y="545" width="13" height="456" fill="url(#c33)"/><rect x="396" y="545" width="13" height="456" fill="url(#c34)"/><rect x="408" y="545" width="13" height="456" fill="url(#c35)"/><rect x="420" y="545" width="13" height="456" fill="url(#c36)"/><rect x="432" y="545" width="13" height="456" fill="url(#c37)"/><rect x="444" y="545" width="13" height="456" fill="url(#c38)"/><rect x="456" y="545" width="13" height="456" fill="url(#c39)"/><rect x="468" y="545" width="13" height="456" fill="url(#c40)"/><rect x="480" y="545" width="13" height="456" fill="url(#c41)"/><rect x="492" y="545" width="13" height="456" fill="url(#c42)"/><rect x="504" y="545" width="13" height="456" fill="url(#c43)"/><rect x="516" y="545" width="13" height="456" fill="url(#c44)"/><rect x="528" y="545" width="13" height="456" fill="url(#c45)"/><rect x="540" y="545" width="13" height="456" fill="url(#c46)"/><rect x="552" y="545" width="13" height="456" fill="url(#c47)"/><rect x="564" y="545" width="13" height="456" fill="url(#c48)"/><rect x="576" y="545" width="13" height="456" fill="url(#c49)"/><rect x="588" y="545" width="13" height="456" fill="url(#c50)"/><rect x="600" y="545" width="13" height="456" fill="url(#c51)"/></g>
  <!-- right strip above PH -->
  <rect x="983" y="0" width="45" height="551" fill="url(#rs)"/>
  <polygon points="983,445 1028,452 1028,457 983,450" fill="#b8e4fa" filter="url(#b1)"/>
  <linearGradient id="shd" x1="984" y1="0" x2="994" y2="0" gradientUnits="userSpaceOnUse"><stop offset="0" stop-color="#000" stop-opacity="0.16"/><stop offset="1" stop-color="#000" stop-opacity="0"/></linearGradient>
  <rect x="984" y="30" width="10" height="485" fill="url(#shd)"/>
  <!-- right strip beside PH -->
  <rect x="1012" y="551" width="16" height="450" fill="url(#rs2)"/>
  <polygon points="1012,618 1028,619 1028,623 1012,622" fill="#b8e4fa" filter="url(#b1)"/>
  <!-- bottom below PH -->
  <linearGradient id="bot" x1="597" y1="0" x2="1028" y2="0" gradientUnits="userSpaceOnUse"><stop offset="0" stop-color="#001f44"/><stop offset="0.3" stop-color="#001838"/><stop offset="0.8" stop-color="#001a3c"/><stop offset="1" stop-color="#00234d"/></linearGradient>
  <rect x="597" y="977" width="431" height="24" fill="url(#bot)"/>
  <!-- logo band below cmd -->
  <linearGradient id="bt2" x1="0" y1="0" x2="1028" y2="0" gradientUnits="userSpaceOnUse">
    <stop offset="0" stop-color="#002a5c"/>
    <stop offset="0.34" stop-color="#0050a0"/>
    <stop offset="0.49" stop-color="#0060b8"/>
    <stop offset="0.68" stop-color="#0078dc"/>
    <stop offset="0.727" stop-color="#0080e4"/>
    <stop offset="0.74" stop-color="#10a0f0"/>
    <stop offset="0.86" stop-color="#10a8f0"/>
    <stop offset="0.875" stop-color="#20b0f0"/>
    <stop offset="1" stop-color="#40c0f4"/>
  </linearGradient>
  <linearGradient id="bb2" x1="0" y1="0" x2="1028" y2="0" gradientUnits="userSpaceOnUse">
    <stop offset="0" stop-color="#002858"/>
    <stop offset="0.29" stop-color="#003a78"/>
    <stop offset="0.34" stop-color="#00458a"/>
    <stop offset="0.49" stop-color="#0058a8"/>
    <stop offset="0.68" stop-color="#0070d0"/>
    <stop offset="0.727" stop-color="#0a90ec"/>
    <stop offset="0.74" stop-color="#10a0f0"/>
    <stop offset="1" stop-color="#40c0f4"/>
  </linearGradient>
  <linearGradient id="bd2" x1="0" y1="0" x2="1028" y2="0" gradientUnits="userSpaceOnUse">
    <stop offset="0" stop-color="#001838"/>
    <stop offset="0.29" stop-color="#001d40"/>
    <stop offset="0.39" stop-color="#002454"/>
    <stop offset="0.535" stop-color="#002e62"/>
    <stop offset="0.63" stop-color="#003a78"/>
    <stop offset="0.73" stop-color="#004a92"/>
    <stop offset="0.86" stop-color="#004e98"/>
    <stop offset="1" stop-color="#004a92"/>
  </linearGradient>
  <rect x="0" y="514" width="1028" height="37" fill="url(#bt2)"/>
  <rect x="0" y="540" width="1028" height="11" fill="url(#bb2)"/>
  <polygon points="-20,518 350,524 750,530 1040,530 1040,541 750,541 350,544 -20,547" fill="url(#bd2)" filter="url(#b1)"/>
  <rect x="886" y="514" width="12" height="37" fill="#0058a8"/>
  <rect x="898" y="514" width="2" height="15" fill="#a8e0ff" opacity="0.75"/>
  <rect x="898" y="528" width="12" height="1.5" fill="#a8e0ff" opacity="0.5"/>
  <rect x="898" y="541" width="2" height="10" fill="#a8e0ff" opacity="0.75"/>
  <rect x="898" y="541" width="12" height="1.5" fill="#a8e0ff" opacity="0.5"/>
  <rect x="884" y="514" width="2" height="15" fill="#a8e0ff" opacity="0.5"/>
  <rect x="884" y="541" width="2" height="10" fill="#a8e0ff" opacity="0.5"/>
  <rect x="748" y="514" width="2" height="15" fill="#a8e0ff" opacity="0.7"/>
  <rect x="748" y="528" width="12" height="1.5" fill="#a8e0ff" opacity="0.5"/>
  <rect x="748" y="541" width="2" height="10" fill="#a8e0ff" opacity="0.7"/>
  <rect x="748" y="541" width="12" height="1.5" fill="#a8e0ff" opacity="0.5"/>
  <!-- left strip -->
  <linearGradient id="ls" x1="0" y1="0" x2="0" y2="514" gradientUnits="userSpaceOnUse"><stop offset="0" stop-color="#001530"/><stop offset="0.3" stop-color="#001838"/><stop offset="0.58" stop-color="#00234d"/><stop offset="0.87" stop-color="#002858"/><stop offset="1" stop-color="#002e62"/></linearGradient>
  <rect x="0" y="0" width="5" height="514" fill="url(#ls)"/>
</svg>

<!-- ================= CMD WINDOW ================= -->
<div class="a" style="left:5px;top:3px;width:979px;height:512px;border:1px solid #1883d7;background:#fcfcfc;">
</div>
<!-- title icon -->
<svg class="a" style="left:14px;top:12px" width="16" height="13" viewBox="0 0 16 13" shape-rendering="crispEdges">
  <rect x="0" y="0" width="16" height="13" fill="#8c8c8c"/>
  <rect x="1" y="1" width="14" height="2" fill="#d6daf0"/>
  <rect x="10" y="1" width="1" height="1" fill="#4050a0"/>
  <rect x="12" y="1" width="1" height="1" fill="#4050a0"/>
  <rect x="14" y="1" width="1" height="1" fill="#4050a0"/>
  <rect x="1" y="3" width="14" height="9" fill="#000"/>
  <g fill="#fff">
    <rect x="3" y="5" width="2" height="1"/><rect x="2" y="6" width="1" height="3"/><rect x="3" y="9" width="2" height="1"/>
    <rect x="5" y="6" width="1" height="1"/><rect x="5" y="8" width="1" height="1"/>
    <rect x="7" y="6" width="1" height="1"/><rect x="7" y="8" width="1" height="1"/>
    <rect x="9" y="5" width="1" height="2"/><rect x="10" y="7" width="1" height="3"/>
    <rect x="12" y="9" width="2" height="1"/>
  </g>
</svg>
<div class="t" style="left:35px;top:12px;font-size:12.5px;">Command Prompt</div>
<!-- buttons -->
<div class="a" style="left:864px;top:18px;width:10px;height:1px;background:#000;"></div>
<div class="a" style="left:909px;top:13px;width:10px;height:10px;border:1px solid #000;"></div>
<svg class="a" style="left:954px;top:12px" width="12" height="12" viewBox="0 0 12 12"><path d="M1 1L11 11M11 1L1 11" stroke="#000" stroke-width="1.1"/></svg>
<!-- console -->
<div class="a" style="left:6px;top:34px;width:960px;height:480px;background:#000;"></div>
<div class="a" style="left:966px;top:34px;width:17px;height:480px;background:#f6f6f6;border-left:1px solid #fcfcfc;"></div>
<div class="a" style="left:967px;top:51px;width:15px;height:17px;background:#c8c8c8;"></div>
<svg class="a" style="left:967px;top:36px" width="15" height="14"><path d="M4.3 9.6L7.5 5.6L10.7 9.6" stroke="#555" stroke-width="1.9" fill="none"/></svg>
<svg class="a" style="left:967px;top:498px" width="15" height="14"><path d="M4.3 5.6L7.5 9.6L10.7 5.6" stroke="#555" stroke-width="1.9" fill="none"/></svg>
<div class="t" style="left:6px;top:51px;font-family:'Liberation Mono',monospace;font-size:13.33px;line-height:16px;color:#c0c0c0;-webkit-text-stroke:0;">C:\Users\xpn\Desktop&gt;</div>
<div class="a" style="left:174px;top:62px;width:8px;height:4px;background:#d8d8d8;"></div>
<!-- mouse cursor -->
<svg class="a" style="left:226px;top:16px" width="14" height="20" viewBox="0 0 14 20"><path d="M0.5 0.5V16L4.2 12.4L7 18.5L9.2 17.5L6.6 11.5H11.6Z" fill="#fff" stroke="#000" stroke-width="1"/></svg>
<div class="a" style="left:226px;top:34px;width:12px;height:3px;background:#000;"></div>

<!-- ================= PROCESS HACKER ================= -->
<div class="a" style="left:597px;top:551px;width:416px;height:427px;background:#f6f6f6;"></div>
<div class="a" style="left:597px;top:551px;width:416px;height:71px;background:#fcfcfc;"></div>
<div class="a" style="left:598px;top:600px;width:415px;height:1px;background:#ececec;"></div>
<div class="a" style="left:597px;top:551px;width:1px;height:427px;background:#e2e2e2;"></div>
<!-- PH icon -->
<svg class="a" style="left:605px;top:558px" width="16" height="14" viewBox="0 0 16 14">
  <rect x="0.2" y="4.5" width="2.8" height="9.5" rx="1" fill="#cfcfcf" stroke="#9a9a9a" stroke-width="0.6"/>
  <rect x="0.5" y="5.5" width="2.2" height="1.6" fill="#10d010"/>
  <rect x="0.3" y="12.8" width="2.6" height="1.2" fill="#707070"/>
  <rect x="3.7" y="0.2" width="11.8" height="10.3" rx="0.8" fill="#d4d4d4" stroke="#a8a8a8" stroke-width="0.6"/>
  <rect x="5" y="2" width="9" height="7" fill="#000"/>
  <path d="M5 5.5L7.5 3.5L11 7L14 5.5" stroke="#00e000" stroke-width="1.4" fill="none"/>
  <rect x="8" y="10.5" width="3" height="1.6" fill="#c0c0c0"/>
  <rect x="6" y="12" width="7" height="2" rx="0.8" fill="#b4b4b4"/>
</svg>
<div class="t" style="left:626px;top:559px;color:#999;transform:scaleX(0.942);">Process Hacker [DESKTOP-F316PQI\xpn]</div>
<div class="a" style="left:894px;top:565px;width:10px;height:1px;background:#999;"></div>
<div class="a" style="left:939px;top:560px;width:10px;height:10px;border:1px solid #999;"></div>
<svg class="a" style="left:984px;top:559px" width="12" height="12" viewBox="0 0 12 12"><path d="M1 1L11 11M11 1L1 11" stroke="#999" stroke-width="1.1"/></svg>
<!-- menu -->
<div class="t" style="left:604px;top:584px;color:#6d6d6d;transform:scaleX(0.96);">Hacker</div>
<div class="t" style="left:655px;top:584px;color:#6d6d6d;transform:scaleX(0.95);">View</div>
<div class="t" style="left:694px;top:584px;color:#6d6d6d;transform:scaleX(0.99);">Tools</div>
<div class="t" style="left:736px;top:584px;color:#6d6d6d;transform:scaleX(0.87);">Users</div>
<div class="t" style="left:778px;top:584px;color:#6d6d6d;transform:scaleX(0.97);">Help</div>
<!-- toolbar -->
<svg class="a" style="left:602px;top:604px" width="16" height="16" viewBox="0 0 16 16">
  <defs><linearGradient id="gr" x1="0" y1="0" x2="0" y2="1"><stop offset="0" stop-color="#58b858"/><stop offset="0.45" stop-color="#98d898"/><stop offset="1" stop-color="#30a030"/></linearGradient></defs>
  <path d="M9.5 0L12.9 4L9.5 7.6V5.9H6.5C4.6 5.9 3.6 7 3.1 8.6H0.1C0.4 4.6 3 2.2 6.5 2.2H9.5Z" fill="url(#gr)" stroke="#2c962c" stroke-width="0.7"/>
  <path d="M6.5 16L3.1 12L6.5 8.4V10.1H9.5C11.4 10.1 12.4 9 12.9 7.4H15.9C15.6 11.4 13 13.8 9.5 13.8H6.5Z" fill="url(#gr)" stroke="#2c962c" stroke-width="0.7"/>
</svg>
<div class="t" style="left:621.5px;top:605px;transform:scaleX(0.95);">Refresh</div>
<svg class="a" style="left:672px;top:604px" width="16" height="16" viewBox="0 0 16 16">
  <g transform="translate(7.5 7.5)">
    <g fill="#d2d2d2" stroke="#8e8e8e" stroke-width="0.8">
      <path d="M-1.4 -7.3H1.4L1.7 -5.2L3.4 -4.4L5.1 -5.7L6.9 -3.9L5.6 -2.2L6.3 -0.5H8.3V2.3L6.2 2.6L5.4 4.3L6.7 6L4.9 7.8L3.2 6.5L1.5 7.2L1.2 9.2H-1.6L-1.9 7.1L-3.6 6.3L-5.3 7.6L-7.1 5.8L-5.8 4.1L-6.5 2.4L-8.5 2.1V-0.7L-6.4 -1L-5.6 -2.7L-6.9 -4.4L-5.1 -6.2L-3.4 -4.9L-1.7 -5.6Z" transform="scale(0.9) translate(0 -0.9)"/>
    </g>
    <circle cx="0" cy="0" r="2" fill="#fff" stroke="#888" stroke-width="0.7"/>
  </g>
  <path d="M13.2 4.6L15.4 6.8L6.4 15.4L3.6 16L4.2 13.2Z" fill="#f6d020" stroke="#d07818" stroke-width="0.9"/>
  <path d="M13.4 5.4L14.6 6.6" stroke="#fff0d0" stroke-width="1"/>
</svg>
<div class="t" style="left:691.5px;top:605px;transform:scaleX(1.03);">Options</div>
<div class="a" style="left:744px;top:604px;width:1px;height:16px;background:#a0a0a0;"></div>
<svg class="a" style="left:819px;top:604px" width="8" height="7" viewBox="0 0 8 7"><path d="M1 1L3.5 3.5L1 6M4.5 1L7 3.5L4.5 6" stroke="#5a5aa8" stroke-width="1.1" fill="none"/></svg>
<div class="a" style="left:833px;top:603px;width:180px;height:19px;border:1px solid #7a7a7a;background:#fcfcfc;"></div>
<div class="t" style="left:836px;top:605px;transform:scaleX(1.09);">ntvdm</div>
<svg class="a" style="left:997px;top:608px" width="10" height="9" viewBox="0 0 10 9"><path d="M1 0.8L9 8.2M9 0.8L1 8.2" stroke="#2a6fa8" stroke-width="1.8"/></svg>
<!-- tabs -->
<div class="a" style="left:598px;top:622px;width:415px;height:1px;background:#dadada;"></div>
<div class="a" style="left:598px;top:623px;width:64px;height:23px;background:#fcfcfc;border:1px solid #d9d9d9;border-bottom:none;"></div>
<div class="a" style="left:661px;top:625px;width:52px;height:19px;background:#f3f3f3;border:1px solid #d9d9d9;"></div>
<div class="a" style="left:712px;top:625px;width:53px;height:19px;background:#f3f3f3;border:1px solid #d9d9d9;"></div>
<div class="a" style="left:764px;top:625px;width:41px;height:19px;background:#f3f3f3;border:1px solid #d9d9d9;"></div>
<div class="t" style="left:605px;top:626px;transform:scaleX(0.88);">Processes</div>
<div class="t" style="left:666px;top:628px;transform:scaleX(0.92);">Services</div>
<div class="t" style="left:719px;top:628px;transform:scaleX(0.92);">Network</div>
<div class="t" style="left:771px;top:628px;transform:scaleX(0.9);">Disk</div>
<!-- list -->
<div class="a" style="left:601px;top:645px;width:408px;height:306px;border:1px solid #646464;background:#fcfcfc;"></div>
<div class="a" style="left:802px;top:646px;width:1px;height:287px;background:#e8e8e8;"></div>
<div class="a" style="left:852px;top:646px;width:1px;height:23px;background:#e8e8e8;"></div>
<div class="a" style="left:897px;top:646px;width:1px;height:23px;background:#e8e8e8;"></div>
<div class="a" style="left:967px;top:646px;width:1px;height:23px;background:#e8e8e8;"></div>
<div class="t" style="left:608px;top:651px;transform:scaleX(1.04);">Name</div>
<div class="t" style="left:829px;top:651px;transform:scaleX(1.0);">PID</div>
<div class="t" style="left:869px;top:651px;transform:scaleX(0.99);">CPU</div>
<div class="t" style="left:906px;top:651px;transform:scaleX(1.07);">I/O total ...</div>
<div class="a" style="left:977px;top:646px;width:31px;height:23px;overflow:hidden;"><div class="t" style="left:0;top:5px;">Privat</div></div>
<div class="a" style="left:602px;top:670px;width:406px;height:19px;background:#fefb9c;"></div>
<svg class="a" style="left:610px;top:675px" width="10" height="8" viewBox="0 0 10 8"><path d="M1 1.5L5 5.5L9 1.5" stroke="#404040" stroke-width="1.5" fill="none"/></svg>
<svg class="a" style="left:624px;top:671px" width="16" height="16" viewBox="0 0 16 16" shape-rendering="crispEdges">
  <rect x="2" y="0" width="10" height="1" fill="#00f0f0"/>
  <rect x="2" y="1" width="10" height="5" fill="#00009c"/>
  <rect x="4" y="2" width="2" height="2" fill="#fff"/>
  <rect x="12" y="0" width="2" height="4" fill="#000"/>
  <rect x="14" y="4" width="2" height="9" fill="#000"/>
  <rect x="7" y="4" width="7" height="2" fill="#000"/>
  <rect x="12" y="6" width="3" height="8" fill="#000"/>
  <rect x="0" y="6" width="11" height="1" fill="#00f0f0"/>
  <rect x="0" y="7" width="12" height="7" fill="#fff"/>
  <rect x="0" y="14" width="12" height="2" fill="#000"/>
  <rect x="1" y="9" width="2" height="5" fill="#000"/>
  <rect x="1" y="11" width="1" height="2" fill="#a000a0"/>
  <rect x="4" y="10" width="3" height="2" fill="#000"/>
  <rect x="5" y="8" width="1" height="6" fill="#000"/>
  <rect x="5" y="8" width="1" height="1" fill="#008080"/>
  <rect x="8" y="9" width="2" height="5" fill="#000"/>
  <rect x="8" y="8" width="1" height="1" fill="#0000f0"/>
  <rect x="3" y="13" width="6" height="1" fill="#000"/>
</svg>
<div class="t" style="left:644px;top:673px;transform:scaleX(1.03);">ntvdm.exe</div>
<div class="t" style="left:829px;top:673px;transform:scaleX(0.97);">384</div>
<div class="t" style="left:870.5px;top:673px;transform:scaleX(0.95);">0.14</div>
<div class="a" style="left:977px;top:670px;width:31px;height:19px;overflow:hidden;"><div class="t" style="left:13px;top:3px;">2.18</div></div>
<!-- h scrollbar -->
<div class="a" style="left:803px;top:933px;width:205px;height:16px;background:#f8f8f8;"></div>
<div class="a" style="left:820px;top:934px;width:63px;height:15px;background:#c8c8c8;"></div>
<svg class="a" style="left:806px;top:936px" width="10" height="10" viewBox="0 0 10 10"><path d="M7 1.5L3 5L7 8.5" stroke="#505050" stroke-width="1.6" fill="none"/></svg>
<svg class="a" style="left:994px;top:936px" width="10" height="10" viewBox="0 0 10 10"><path d="M3 1.5L7 5L3 8.5" stroke="#505050" stroke-width="1.6" fill="none"/></svg>
<!-- status bar -->
<div class="a" style="left:598px;top:953px;width:413px;height:1px;background:#d8d8d8;"></div>
<div class="a" style="left:1010px;top:623px;width:1px;height:331px;background:#d8d8d8;"></div>
<div class="a" style="left:598px;top:955px;width:415px;height:1px;background:#d8d8d8;"></div>
<div class="a" style="left:701px;top:958px;width:1px;height:18px;background:#dcdcdc;"></div>
<div class="a" style="left:904px;top:958px;width:1px;height:18px;background:#dcdcdc;"></div>
<div class="a" style="left:983px;top:958px;width:1px;height:18px;background:#dcdcdc;"></div>
<div class="t" style="left:598.5px;top:961px;transform:scaleX(0.925);">CPU Usage: 2.87%</div>
<div class="t" style="left:706px;top:961px;transform:scaleX(0.955);">Physical memory: 738.9 MB (36.13%)</div>
<div class="t" style="left:909px;top:961px;transform:scaleX(0.92);">Processes: 49</div>
<svg class="a" style="left:1000px;top:964px" width="12" height="12" viewBox="0 0 12 12"><g fill="#b0b0b0"><rect x="9" y="1" width="2" height="2"/><rect x="6" y="4" width="2" height="2"/><rect x="9" y="4" width="2" height="2"/><rect x="3" y="7" width="2" height="2"/><rect x="6" y="7" width="2" height="2"/><rect x="9" y="7" width="2" height="2"/></g></svg>
</body></html>
